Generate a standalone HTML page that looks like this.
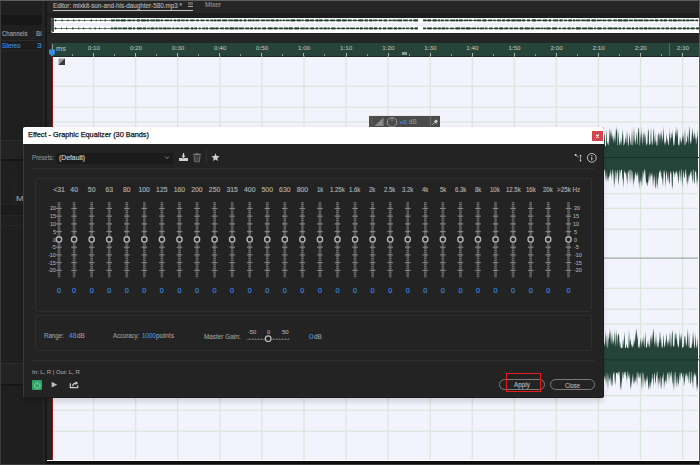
<!DOCTYPE html><html><head><meta charset="utf-8"><style>
*{box-sizing:border-box}
html,body{margin:0;padding:0}
body{width:700px;height:465px;overflow:hidden;position:relative;background:#1f1f1f;font-family:"Liberation Sans",sans-serif}
.ab{position:absolute}
.t{position:absolute;white-space:nowrap;line-height:1;-webkit-text-stroke:0.14px currentColor}

</style></head><body>
<div class="ab" style="left:0;top:0;width:45px;height:465px;background:#1f1f1f"></div>
<div class="ab" style="left:0;top:0;width:1px;height:465px;background:#3a3a3a"></div>
<div class="ab" style="left:1px;top:15px;width:41px;height:10px;background:#171717;border-radius:0 2px 2px 0"></div>
<div class="t" style="left:1.80px;top:30.00px;font-size:7.27px;color:#a0a0a0;transform:scaleX(0.828);transform-origin:0 0;">Channels</div>
<div class="ab" style="left:33px;top:29px;width:1px;height:10px;background:#262626"></div>
<div class="t" style="left:36.30px;top:30.00px;font-size:7.27px;color:#a0a0a0;transform:scaleX(0.855);transform-origin:0 0;">Bi</div>
<div class="ab" style="left:1px;top:40px;width:41px;height:1px;background:#2b2b2b"></div>
<div class="ab" style="left:1px;top:41px;width:41px;height:9px;background:#1c1c1c"></div>
<div class="t" style="left:2.42px;top:43.00px;font-size:6.69px;color:#3a8de0;transform:scaleX(0.941);transform-origin:0 0;">Stereo</div>
<div class="t" style="left:36.77px;top:43.00px;font-size:6.69px;color:#3a8de0;transform:scaleX(1.228);transform-origin:0 0;">3</div>
<div class="ab" style="left:1px;top:50px;width:41px;height:1px;background:#262626"></div>
<div class="ab" style="left:1px;top:140px;width:44px;height:1px;background:#2c2c2c"></div>
<div class="ab" style="left:1px;top:141px;width:44px;height:19px;background:#232323"></div>
<div class="ab" style="left:1px;top:159px;width:44px;height:2px;background:#151515"></div>
<div class="t" style="left:16.47px;top:196.00px;font-size:6.54px;color:#9a9a9a;transform:scaleX(1.394);transform-origin:0 0;">Mi</div>
<div class="ab" style="left:14px;top:182px;width:1px;height:22px;background:#262626"></div>
<div class="ab" style="left:1px;top:204px;width:44px;height:1px;background:#262626"></div>
<div class="ab" style="left:1px;top:205px;width:44px;height:10px;background:#1b1b1b"></div>
<div class="ab" style="left:1px;top:215px;width:44px;height:1px;background:#262626"></div>
<div class="ab" style="left:1px;top:225px;width:44px;height:1px;background:#262626"></div>
<div class="ab" style="left:1px;top:363px;width:44px;height:1px;background:#2c2c2c"></div>
<div class="ab" style="left:1px;top:364px;width:44px;height:21px;background:#232323"></div>
<div class="ab" style="left:1px;top:384px;width:44px;height:2px;background:#151515"></div>
<div class="ab" style="left:42px;top:0;width:3px;height:465px;background:#242424"></div>
<div class="ab" style="left:45px;top:0;width:2px;height:465px;background:#171717"></div>
<div class="ab" style="left:47px;top:0;width:5px;height:465px;background:#252525"></div>
<div class="ab" style="left:0;top:0;width:700px;height:1px;background:#5e5e5e"></div>
<div class="ab" style="left:47px;top:1px;width:653px;height:12px;background:#262626"></div>
<div class="ab" style="left:47px;top:13px;width:653px;height:4px;background:#1e1e1e"></div>
<div class="t" style="left:53.30px;top:2.00px;font-size:6.98px;color:#b4b4b4;transform:scaleX(0.905);transform-origin:0 0;">Editor: mixkit-sun-and-his-daughter-580.mp3 *</div>
<div class="ab" style="left:53px;top:10px;width:140px;height:1px;background:#c4c4c4"></div>
<div class="ab" style="left:188px;top:2.1px;width:5px;height:2.9px;background:#5c5c5c"></div>
<div class="ab" style="left:188px;top:6px;width:5px;height:1.1px;background:#a8a8a8"></div>
<div class="t" style="left:205.47px;top:2.00px;font-size:6.69px;color:#8e8e8e;transform:scaleX(0.982);transform-origin:0 0;">Mixer</div>
<div class="ab" style="left:47px;top:32px;width:653px;height:10.5px;background:#252525"></div>
<div class="ab" style="left:47px;top:32px;width:653px;height:2px;background:#1d1d1d"></div>
<div class="ab" style="left:51px;top:17.5px;width:648px;height:15px;background:#ffffff;border-radius:2px 0 0 2px"></div>
<div class="ab" style="left:54px;top:22.9px;width:645px;height:3.4px;background:#f0f0fa"></div>
<div class="ab" style="left:50.8px;top:18px;width:2.8px;height:13.5px;background:#4a4a4a;border-radius:2px 0 0 2px"></div>
<svg class="ab" style="left:0;top:0" width="700" height="40"><rect x="54" y="20.00" width="364" height="1.0" fill="#6a8577"/><rect x="423" y="20.00" width="275" height="1.0" fill="#6a8577"/><rect x="55.0" y="19.41" width="1.2" height="1.98" fill="#22402f"/><rect x="61.5" y="19.42" width="1.2" height="1.95" fill="#22402f"/><rect x="67.4" y="19.42" width="0.9" height="1.96" fill="#22402f"/><rect x="73.1" y="19.53" width="1.4" height="1.75" fill="#22402f"/><rect x="78.6" y="19.35" width="0.9" height="2.10" fill="#22402f"/><rect x="84.4" y="19.30" width="0.8" height="2.19" fill="#22402f"/><rect x="90.6" y="19.40" width="1.3" height="2.01" fill="#22402f"/><rect x="95.8" y="19.42" width="0.8" height="1.96" fill="#22402f"/><rect x="100.2" y="19.49" width="1.0" height="1.82" fill="#22402f"/><rect x="104.7" y="19.44" width="1.2" height="1.92" fill="#22402f"/><rect x="111.1" y="19.39" width="3.6" height="2.02" fill="#22402f"/><rect x="115.8" y="19.44" width="4.0" height="1.93" fill="#22402f"/><rect x="120.7" y="19.30" width="5.0" height="2.20" fill="#22402f"/><rect x="127.3" y="19.47" width="4.1" height="1.86" fill="#22402f"/><rect x="132.3" y="19.53" width="2.9" height="1.74" fill="#22402f"/><rect x="136.7" y="19.34" width="3.2" height="2.12" fill="#22402f"/><rect x="141.0" y="19.34" width="4.9" height="2.12" fill="#22402f"/><rect x="146.5" y="19.32" width="2.6" height="2.16" fill="#22402f"/><rect x="150.3" y="19.45" width="4.9" height="1.90" fill="#22402f"/><rect x="155.9" y="19.36" width="3.9" height="2.09" fill="#22402f"/><rect x="160.7" y="19.47" width="2.3" height="1.87" fill="#22402f"/><rect x="164.7" y="19.52" width="4.3" height="1.76" fill="#22402f"/><rect x="169.9" y="19.54" width="2.3" height="1.73" fill="#22402f"/><rect x="173.8" y="19.41" width="2.5" height="1.98" fill="#22402f"/><rect x="177.4" y="19.37" width="2.6" height="2.07" fill="#22402f"/><rect x="180.8" y="19.52" width="3.9" height="1.76" fill="#22402f"/><rect x="185.8" y="19.48" width="2.6" height="1.83" fill="#22402f"/><rect x="190.2" y="19.47" width="4.4" height="1.85" fill="#22402f"/><rect x="196.3" y="19.45" width="2.6" height="1.90" fill="#22402f"/><rect x="200.5" y="19.52" width="3.9" height="1.75" fill="#22402f"/><rect x="206.2" y="19.49" width="2.6" height="1.83" fill="#22402f"/><rect x="210.4" y="19.48" width="3.0" height="1.85" fill="#22402f"/><rect x="214.1" y="19.40" width="2.3" height="1.99" fill="#22402f"/><rect x="217.2" y="19.46" width="3.8" height="1.89" fill="#22402f"/><rect x="222.2" y="19.43" width="4.9" height="1.94" fill="#22402f"/><rect x="228.4" y="19.50" width="4.6" height="1.79" fill="#22402f"/><rect x="233.7" y="19.35" width="4.7" height="2.11" fill="#22402f"/><rect x="239.4" y="19.37" width="2.6" height="2.07" fill="#22402f"/><rect x="243.7" y="19.31" width="2.6" height="2.18" fill="#22402f"/><rect x="247.9" y="19.44" width="3.8" height="1.91" fill="#22402f"/><rect x="252.4" y="19.31" width="2.1" height="2.18" fill="#22402f"/><rect x="255.4" y="19.49" width="4.1" height="1.83" fill="#22402f"/><rect x="261.1" y="19.48" width="3.8" height="1.85" fill="#22402f"/><rect x="265.7" y="19.53" width="4.2" height="1.73" fill="#22402f"/><rect x="270.8" y="19.34" width="3.7" height="2.13" fill="#22402f"/><rect x="275.8" y="19.32" width="2.8" height="2.16" fill="#22402f"/><rect x="279.5" y="19.48" width="2.0" height="1.83" fill="#22402f"/><rect x="282.7" y="19.51" width="2.2" height="1.79" fill="#22402f"/><rect x="285.9" y="19.52" width="3.7" height="1.77" fill="#22402f"/><rect x="290.6" y="19.30" width="4.7" height="2.19" fill="#22402f"/><rect x="296.7" y="19.40" width="4.1" height="1.99" fill="#22402f"/><rect x="301.5" y="19.55" width="2.1" height="1.71" fill="#22402f"/><rect x="305.3" y="19.31" width="4.1" height="2.18" fill="#22402f"/><rect x="310.1" y="19.43" width="3.9" height="1.94" fill="#22402f"/><rect x="315.5" y="19.30" width="3.0" height="2.20" fill="#22402f"/><rect x="319.1" y="19.37" width="3.6" height="2.07" fill="#22402f"/><rect x="324.4" y="19.37" width="4.2" height="2.05" fill="#22402f"/><rect x="330.2" y="19.46" width="4.7" height="1.88" fill="#22402f"/><rect x="336.4" y="19.33" width="4.7" height="2.14" fill="#22402f"/><rect x="342.2" y="19.33" width="4.4" height="2.13" fill="#22402f"/><rect x="347.8" y="19.45" width="3.9" height="1.89" fill="#22402f"/><rect x="353.0" y="19.53" width="3.8" height="1.74" fill="#22402f"/><rect x="358.2" y="19.33" width="5.0" height="2.14" fill="#22402f"/><rect x="364.6" y="19.37" width="3.2" height="2.07" fill="#22402f"/><rect x="369.1" y="19.34" width="3.3" height="2.12" fill="#22402f"/><rect x="373.1" y="19.54" width="4.3" height="1.71" fill="#22402f"/><rect x="378.7" y="19.49" width="3.4" height="1.82" fill="#22402f"/><rect x="383.6" y="19.40" width="3.5" height="2.01" fill="#22402f"/><rect x="388.8" y="19.55" width="2.8" height="1.71" fill="#22402f"/><rect x="392.5" y="19.50" width="4.0" height="1.80" fill="#22402f"/><rect x="397.3" y="19.39" width="4.7" height="2.03" fill="#22402f"/><rect x="403.2" y="19.47" width="4.7" height="1.86" fill="#22402f"/><rect x="409.3" y="19.44" width="2.6" height="1.92" fill="#22402f"/><rect x="413.4" y="19.33" width="4.7" height="2.14" fill="#22402f"/><rect x="423.0" y="19.47" width="3.7" height="1.86" fill="#22402f"/><rect x="427.5" y="19.34" width="3.5" height="2.12" fill="#22402f"/><rect x="432.6" y="19.31" width="4.1" height="2.18" fill="#22402f"/><rect x="437.7" y="19.44" width="2.5" height="1.93" fill="#22402f"/><rect x="441.1" y="19.45" width="2.6" height="1.91" fill="#22402f"/><rect x="445.1" y="19.47" width="3.5" height="1.86" fill="#22402f"/><rect x="450.2" y="19.44" width="4.9" height="1.93" fill="#22402f"/><rect x="455.8" y="19.33" width="2.1" height="2.14" fill="#22402f"/><rect x="458.6" y="19.41" width="4.1" height="1.99" fill="#22402f"/><rect x="463.7" y="19.55" width="4.4" height="1.71" fill="#22402f"/><rect x="468.8" y="19.54" width="3.4" height="1.71" fill="#22402f"/><rect x="473.8" y="19.51" width="2.7" height="1.77" fill="#22402f"/><rect x="477.1" y="19.44" width="3.9" height="1.92" fill="#22402f"/><rect x="482.4" y="19.35" width="4.0" height="2.10" fill="#22402f"/><rect x="488.1" y="19.50" width="4.1" height="1.80" fill="#22402f"/><rect x="493.3" y="19.55" width="2.5" height="1.71" fill="#22402f"/><rect x="497.0" y="19.51" width="4.1" height="1.79" fill="#22402f"/><rect x="502.1" y="19.38" width="3.0" height="2.05" fill="#22402f"/><rect x="506.4" y="19.36" width="3.8" height="2.08" fill="#22402f"/><rect x="511.3" y="19.32" width="4.4" height="2.15" fill="#22402f"/><rect x="516.4" y="19.37" width="4.8" height="2.06" fill="#22402f"/><rect x="521.9" y="19.39" width="3.4" height="2.01" fill="#22402f"/><rect x="527.0" y="19.41" width="3.1" height="1.98" fill="#22402f"/><rect x="531.8" y="19.31" width="4.4" height="2.17" fill="#22402f"/><rect x="537.3" y="19.50" width="4.0" height="1.80" fill="#22402f"/><rect x="542.7" y="19.39" width="4.5" height="2.02" fill="#22402f"/><rect x="548.6" y="19.33" width="2.6" height="2.15" fill="#22402f"/><rect x="553.1" y="19.42" width="4.9" height="1.97" fill="#22402f"/><rect x="559.5" y="19.32" width="3.0" height="2.15" fill="#22402f"/><rect x="564.1" y="19.53" width="3.0" height="1.74" fill="#22402f"/><rect x="568.3" y="19.36" width="3.7" height="2.08" fill="#22402f"/><rect x="573.1" y="19.35" width="2.1" height="2.10" fill="#22402f"/><rect x="575.9" y="19.51" width="4.4" height="1.79" fill="#22402f"/><rect x="581.3" y="19.51" width="4.4" height="1.77" fill="#22402f"/><rect x="586.4" y="19.37" width="3.5" height="2.06" fill="#22402f"/><rect x="591.6" y="19.31" width="4.1" height="2.17" fill="#22402f"/><rect x="596.9" y="19.53" width="4.8" height="1.74" fill="#22402f"/><rect x="602.6" y="19.48" width="3.6" height="1.85" fill="#22402f"/><rect x="607.6" y="19.42" width="3.9" height="1.96" fill="#22402f"/><rect x="613.2" y="19.47" width="3.7" height="1.86" fill="#22402f"/><rect x="617.9" y="19.32" width="4.5" height="2.15" fill="#22402f"/><rect x="623.3" y="19.31" width="4.6" height="2.18" fill="#22402f"/><rect x="629.1" y="19.50" width="3.7" height="1.80" fill="#22402f"/><rect x="634.0" y="19.40" width="3.5" height="2.00" fill="#22402f"/><rect x="638.2" y="19.42" width="4.9" height="1.96" fill="#22402f"/><rect x="644.1" y="19.41" width="4.4" height="1.98" fill="#22402f"/><rect x="649.7" y="19.53" width="4.1" height="1.73" fill="#22402f"/><rect x="655.1" y="19.31" width="3.2" height="2.18" fill="#22402f"/><rect x="660.0" y="19.43" width="2.8" height="1.94" fill="#22402f"/><rect x="663.6" y="19.35" width="3.3" height="2.11" fill="#22402f"/><rect x="668.6" y="19.47" width="3.4" height="1.86" fill="#22402f"/><rect x="672.8" y="19.32" width="3.9" height="2.16" fill="#22402f"/><rect x="677.4" y="19.54" width="4.3" height="1.71" fill="#22402f"/><rect x="682.6" y="19.38" width="2.7" height="2.04" fill="#22402f"/><rect x="686.3" y="19.40" width="3.1" height="2.01" fill="#22402f"/><rect x="690.1" y="19.52" width="4.2" height="1.76" fill="#22402f"/><rect x="695.5" y="19.50" width="2.8" height="1.80" fill="#22402f"/><rect x="54" y="28.00" width="364" height="1.0" fill="#6a8577"/><rect x="423" y="28.00" width="275" height="1.0" fill="#6a8577"/><rect x="55.0" y="27.39" width="1.2" height="2.03" fill="#22402f"/><rect x="61.0" y="27.55" width="0.9" height="1.71" fill="#22402f"/><rect x="66.2" y="27.35" width="1.0" height="2.11" fill="#22402f"/><rect x="72.1" y="27.41" width="1.3" height="1.98" fill="#22402f"/><rect x="78.2" y="27.44" width="0.9" height="1.92" fill="#22402f"/><rect x="82.9" y="27.54" width="1.5" height="1.73" fill="#22402f"/><rect x="89.6" y="27.38" width="0.9" height="2.04" fill="#22402f"/><rect x="94.6" y="27.34" width="1.1" height="2.12" fill="#22402f"/><rect x="99.3" y="27.32" width="0.8" height="2.16" fill="#22402f"/><rect x="104.6" y="27.30" width="0.9" height="2.19" fill="#22402f"/><rect x="110.9" y="27.44" width="2.3" height="1.91" fill="#22402f"/><rect x="114.0" y="27.39" width="2.9" height="2.01" fill="#22402f"/><rect x="117.7" y="27.54" width="4.1" height="1.73" fill="#22402f"/><rect x="122.6" y="27.45" width="4.4" height="1.90" fill="#22402f"/><rect x="128.2" y="27.43" width="3.8" height="1.94" fill="#22402f"/><rect x="133.0" y="27.37" width="2.1" height="2.06" fill="#22402f"/><rect x="136.9" y="27.38" width="4.9" height="2.03" fill="#22402f"/><rect x="142.8" y="27.38" width="3.1" height="2.05" fill="#22402f"/><rect x="147.3" y="27.49" width="2.3" height="1.82" fill="#22402f"/><rect x="150.7" y="27.35" width="3.5" height="2.11" fill="#22402f"/><rect x="155.5" y="27.34" width="2.1" height="2.11" fill="#22402f"/><rect x="158.7" y="27.49" width="3.6" height="1.81" fill="#22402f"/><rect x="163.3" y="27.36" width="3.2" height="2.09" fill="#22402f"/><rect x="167.2" y="27.51" width="3.6" height="1.79" fill="#22402f"/><rect x="172.3" y="27.48" width="2.1" height="1.84" fill="#22402f"/><rect x="175.4" y="27.54" width="3.9" height="1.73" fill="#22402f"/><rect x="180.5" y="27.48" width="2.6" height="1.84" fill="#22402f"/><rect x="184.3" y="27.43" width="4.9" height="1.94" fill="#22402f"/><rect x="190.9" y="27.32" width="2.5" height="2.16" fill="#22402f"/><rect x="194.4" y="27.36" width="2.6" height="2.07" fill="#22402f"/><rect x="198.7" y="27.48" width="2.0" height="1.83" fill="#22402f"/><rect x="202.3" y="27.49" width="3.0" height="1.82" fill="#22402f"/><rect x="205.9" y="27.40" width="2.1" height="2.01" fill="#22402f"/><rect x="209.8" y="27.42" width="5.0" height="1.95" fill="#22402f"/><rect x="215.4" y="27.35" width="3.0" height="2.09" fill="#22402f"/><rect x="220.0" y="27.49" width="3.9" height="1.81" fill="#22402f"/><rect x="225.1" y="27.39" width="3.4" height="2.01" fill="#22402f"/><rect x="229.5" y="27.33" width="4.8" height="2.15" fill="#22402f"/><rect x="235.1" y="27.33" width="2.9" height="2.14" fill="#22402f"/><rect x="238.9" y="27.42" width="4.8" height="1.96" fill="#22402f"/><rect x="245.2" y="27.50" width="4.1" height="1.81" fill="#22402f"/><rect x="250.2" y="27.38" width="2.8" height="2.04" fill="#22402f"/><rect x="254.4" y="27.33" width="2.4" height="2.14" fill="#22402f"/><rect x="257.9" y="27.44" width="2.7" height="1.92" fill="#22402f"/><rect x="262.4" y="27.39" width="3.7" height="2.01" fill="#22402f"/><rect x="267.8" y="27.36" width="4.9" height="2.08" fill="#22402f"/><rect x="273.8" y="27.32" width="3.8" height="2.15" fill="#22402f"/><rect x="279.1" y="27.46" width="3.7" height="1.87" fill="#22402f"/><rect x="283.9" y="27.41" width="4.2" height="1.98" fill="#22402f"/><rect x="288.7" y="27.32" width="4.1" height="2.15" fill="#22402f"/><rect x="294.4" y="27.32" width="4.7" height="2.16" fill="#22402f"/><rect x="300.4" y="27.46" width="4.4" height="1.89" fill="#22402f"/><rect x="305.4" y="27.47" width="3.1" height="1.86" fill="#22402f"/><rect x="310.2" y="27.41" width="4.1" height="1.97" fill="#22402f"/><rect x="315.6" y="27.42" width="2.4" height="1.97" fill="#22402f"/><rect x="319.5" y="27.49" width="3.2" height="1.82" fill="#22402f"/><rect x="323.7" y="27.38" width="3.0" height="2.04" fill="#22402f"/><rect x="327.5" y="27.47" width="2.3" height="1.86" fill="#22402f"/><rect x="331.2" y="27.39" width="4.3" height="2.03" fill="#22402f"/><rect x="337.2" y="27.54" width="3.1" height="1.71" fill="#22402f"/><rect x="341.5" y="27.51" width="3.3" height="1.79" fill="#22402f"/><rect x="346.2" y="27.49" width="3.0" height="1.82" fill="#22402f"/><rect x="350.2" y="27.55" width="4.8" height="1.70" fill="#22402f"/><rect x="356.1" y="27.50" width="2.8" height="1.80" fill="#22402f"/><rect x="360.0" y="27.32" width="2.7" height="2.16" fill="#22402f"/><rect x="363.9" y="27.51" width="4.1" height="1.78" fill="#22402f"/><rect x="369.1" y="27.34" width="3.8" height="2.12" fill="#22402f"/><rect x="373.9" y="27.34" width="3.4" height="2.13" fill="#22402f"/><rect x="378.8" y="27.42" width="2.7" height="1.97" fill="#22402f"/><rect x="383.0" y="27.38" width="3.2" height="2.04" fill="#22402f"/><rect x="387.6" y="27.41" width="4.9" height="1.98" fill="#22402f"/><rect x="393.9" y="27.37" width="3.1" height="2.07" fill="#22402f"/><rect x="398.0" y="27.46" width="3.5" height="1.88" fill="#22402f"/><rect x="402.5" y="27.49" width="2.4" height="1.81" fill="#22402f"/><rect x="406.1" y="27.54" width="2.8" height="1.72" fill="#22402f"/><rect x="410.4" y="27.32" width="2.9" height="2.17" fill="#22402f"/><rect x="414.6" y="27.33" width="3.2" height="2.14" fill="#22402f"/><rect x="423.0" y="27.52" width="3.0" height="1.76" fill="#22402f"/><rect x="427.3" y="27.40" width="4.5" height="2.00" fill="#22402f"/><rect x="433.4" y="27.40" width="3.2" height="2.01" fill="#22402f"/><rect x="437.6" y="27.46" width="3.2" height="1.89" fill="#22402f"/><rect x="441.8" y="27.35" width="3.2" height="2.10" fill="#22402f"/><rect x="445.8" y="27.49" width="2.6" height="1.83" fill="#22402f"/><rect x="450.2" y="27.54" width="3.6" height="1.73" fill="#22402f"/><rect x="455.4" y="27.34" width="4.6" height="2.11" fill="#22402f"/><rect x="461.0" y="27.47" width="4.2" height="1.85" fill="#22402f"/><rect x="466.0" y="27.34" width="4.6" height="2.12" fill="#22402f"/><rect x="471.5" y="27.54" width="4.6" height="1.71" fill="#22402f"/><rect x="477.1" y="27.51" width="2.0" height="1.79" fill="#22402f"/><rect x="479.9" y="27.48" width="4.1" height="1.85" fill="#22402f"/><rect x="484.9" y="27.47" width="2.6" height="1.86" fill="#22402f"/><rect x="489.1" y="27.52" width="3.8" height="1.75" fill="#22402f"/><rect x="494.3" y="27.44" width="3.6" height="1.92" fill="#22402f"/><rect x="499.2" y="27.35" width="4.0" height="2.10" fill="#22402f"/><rect x="504.3" y="27.43" width="3.9" height="1.93" fill="#22402f"/><rect x="509.6" y="27.45" width="3.2" height="1.91" fill="#22402f"/><rect x="514.0" y="27.48" width="4.1" height="1.84" fill="#22402f"/><rect x="519.8" y="27.34" width="3.5" height="2.13" fill="#22402f"/><rect x="524.7" y="27.38" width="4.9" height="2.04" fill="#22402f"/><rect x="530.7" y="27.40" width="3.2" height="2.00" fill="#22402f"/><rect x="535.4" y="27.52" width="4.5" height="1.76" fill="#22402f"/><rect x="540.6" y="27.53" width="2.3" height="1.74" fill="#22402f"/><rect x="543.6" y="27.49" width="2.0" height="1.82" fill="#22402f"/><rect x="546.4" y="27.40" width="4.1" height="2.01" fill="#22402f"/><rect x="552.2" y="27.36" width="4.9" height="2.07" fill="#22402f"/><rect x="558.8" y="27.49" width="2.1" height="1.81" fill="#22402f"/><rect x="562.6" y="27.50" width="3.4" height="1.80" fill="#22402f"/><rect x="567.5" y="27.41" width="3.3" height="1.97" fill="#22402f"/><rect x="571.8" y="27.53" width="2.7" height="1.74" fill="#22402f"/><rect x="575.8" y="27.30" width="4.9" height="2.19" fill="#22402f"/><rect x="582.2" y="27.46" width="4.8" height="1.88" fill="#22402f"/><rect x="588.0" y="27.40" width="4.8" height="2.00" fill="#22402f"/><rect x="594.1" y="27.49" width="2.0" height="1.81" fill="#22402f"/><rect x="597.4" y="27.34" width="4.2" height="2.11" fill="#22402f"/><rect x="603.1" y="27.45" width="3.0" height="1.89" fill="#22402f"/><rect x="607.7" y="27.43" width="5.0" height="1.94" fill="#22402f"/><rect x="613.5" y="27.42" width="3.9" height="1.97" fill="#22402f"/><rect x="618.4" y="27.45" width="2.7" height="1.89" fill="#22402f"/><rect x="622.5" y="27.41" width="2.4" height="1.97" fill="#22402f"/><rect x="626.6" y="27.49" width="4.2" height="1.83" fill="#22402f"/><rect x="631.9" y="27.37" width="2.3" height="2.07" fill="#22402f"/><rect x="635.6" y="27.41" width="2.5" height="1.97" fill="#22402f"/><rect x="639.4" y="27.46" width="3.7" height="1.89" fill="#22402f"/><rect x="644.1" y="27.30" width="3.1" height="2.20" fill="#22402f"/><rect x="648.2" y="27.44" width="3.5" height="1.93" fill="#22402f"/><rect x="652.5" y="27.50" width="3.2" height="1.80" fill="#22402f"/><rect x="656.7" y="27.46" width="3.1" height="1.87" fill="#22402f"/><rect x="661.5" y="27.47" width="2.9" height="1.87" fill="#22402f"/><rect x="665.8" y="27.42" width="3.2" height="1.96" fill="#22402f"/><rect x="670.4" y="27.38" width="2.2" height="2.04" fill="#22402f"/><rect x="673.3" y="27.35" width="2.8" height="2.10" fill="#22402f"/><rect x="677.8" y="27.51" width="4.0" height="1.79" fill="#22402f"/><rect x="683.0" y="27.34" width="2.8" height="2.12" fill="#22402f"/><rect x="686.7" y="27.39" width="2.6" height="2.02" fill="#22402f"/><rect x="690.7" y="27.43" width="3.8" height="1.94" fill="#22402f"/><rect x="696.2" y="27.32" width="3.4" height="2.17" fill="#22402f"/></svg>
<div class="ab" style="left:51px;top:42.5px;width:648px;height:14px;background:#27443a"></div>
<div class="ab" style="left:51px;top:42px;width:648px;height:1px;background:#1d2a24"></div>
<div class="ab" style="left:51px;top:56px;width:648px;height:1px;background:#1a2620"></div>
<div class="t" style="left:55.52px;top:45.00px;font-size:7.56px;color:#a9b5ae;transform:scaleX(0.986);transform-origin:0 0;">ms</div>
<div class="t" style="left:87.81px;top:45.00px;font-size:6.25px;color:#a9b5ae;transform:scaleX(1.000);transform-origin:0 0;">0:10</div>
<div class="ab" style="left:93.10px;top:53px;width:1px;height:3px;background:#a9b5ae"></div>
<div class="t" style="left:129.88px;top:45.00px;font-size:6.25px;color:#a9b5ae;transform:scaleX(1.000);transform-origin:0 0;">0:20</div>
<div class="ab" style="left:135.17px;top:53px;width:1px;height:3px;background:#a9b5ae"></div>
<div class="t" style="left:171.95px;top:45.00px;font-size:6.25px;color:#a9b5ae;transform:scaleX(1.000);transform-origin:0 0;">0:30</div>
<div class="ab" style="left:177.24px;top:53px;width:1px;height:3px;background:#a9b5ae"></div>
<div class="t" style="left:214.02px;top:45.00px;font-size:6.25px;color:#a9b5ae;transform:scaleX(1.000);transform-origin:0 0;">0:40</div>
<div class="ab" style="left:219.31px;top:53px;width:1px;height:3px;background:#a9b5ae"></div>
<div class="t" style="left:256.09px;top:45.00px;font-size:6.25px;color:#a9b5ae;transform:scaleX(1.000);transform-origin:0 0;">0:50</div>
<div class="ab" style="left:261.38px;top:53px;width:1px;height:3px;background:#a9b5ae"></div>
<div class="t" style="left:298.05px;top:45.00px;font-size:6.25px;color:#a9b5ae;transform:scaleX(1.000);transform-origin:0 0;">1:00</div>
<div class="ab" style="left:303.45px;top:53px;width:1px;height:3px;background:#a9b5ae"></div>
<div class="t" style="left:340.12px;top:45.00px;font-size:6.25px;color:#a9b5ae;transform:scaleX(1.000);transform-origin:0 0;">1:10</div>
<div class="ab" style="left:345.52px;top:53px;width:1px;height:3px;background:#a9b5ae"></div>
<div class="t" style="left:382.19px;top:45.00px;font-size:6.25px;color:#a9b5ae;transform:scaleX(1.000);transform-origin:0 0;">1:20</div>
<div class="ab" style="left:387.59px;top:53px;width:1px;height:3px;background:#a9b5ae"></div>
<div class="t" style="left:424.26px;top:45.00px;font-size:6.25px;color:#a9b5ae;transform:scaleX(1.000);transform-origin:0 0;">1:30</div>
<div class="ab" style="left:429.66px;top:53px;width:1px;height:3px;background:#a9b5ae"></div>
<div class="t" style="left:466.33px;top:45.00px;font-size:6.25px;color:#a9b5ae;transform:scaleX(1.000);transform-origin:0 0;">1:40</div>
<div class="ab" style="left:471.73px;top:53px;width:1px;height:3px;background:#a9b5ae"></div>
<div class="t" style="left:508.40px;top:45.00px;font-size:6.25px;color:#a9b5ae;transform:scaleX(1.000);transform-origin:0 0;">1:50</div>
<div class="ab" style="left:513.80px;top:53px;width:1px;height:3px;background:#a9b5ae"></div>
<div class="t" style="left:550.54px;top:45.00px;font-size:6.25px;color:#a9b5ae;transform:scaleX(1.000);transform-origin:0 0;">2:00</div>
<div class="ab" style="left:555.87px;top:53px;width:1px;height:3px;background:#a9b5ae"></div>
<div class="t" style="left:592.61px;top:45.00px;font-size:6.25px;color:#a9b5ae;transform:scaleX(1.000);transform-origin:0 0;">2:10</div>
<div class="ab" style="left:597.94px;top:53px;width:1px;height:3px;background:#a9b5ae"></div>
<div class="t" style="left:634.68px;top:45.00px;font-size:6.25px;color:#a9b5ae;transform:scaleX(1.000);transform-origin:0 0;">2:20</div>
<div class="ab" style="left:640.01px;top:53px;width:1px;height:3px;background:#a9b5ae"></div>
<div class="t" style="left:676.75px;top:45.00px;font-size:6.25px;color:#a9b5ae;transform:scaleX(1.000);transform-origin:0 0;">2:30</div>
<div class="ab" style="left:682.08px;top:53px;width:1px;height:3px;background:#a9b5ae"></div>
<div class="ab" style="left:72.06px;top:54px;width:1px;height:2px;background:#8a9a90"></div>
<div class="ab" style="left:114.13px;top:54px;width:1px;height:2px;background:#8a9a90"></div>
<div class="ab" style="left:156.20px;top:54px;width:1px;height:2px;background:#8a9a90"></div>
<div class="ab" style="left:198.28px;top:54px;width:1px;height:2px;background:#8a9a90"></div>
<div class="ab" style="left:240.34px;top:54px;width:1px;height:2px;background:#8a9a90"></div>
<div class="ab" style="left:282.41px;top:54px;width:1px;height:2px;background:#8a9a90"></div>
<div class="ab" style="left:324.49px;top:54px;width:1px;height:2px;background:#8a9a90"></div>
<div class="ab" style="left:366.55px;top:54px;width:1px;height:2px;background:#8a9a90"></div>
<div class="ab" style="left:408.62px;top:54px;width:1px;height:2px;background:#8a9a90"></div>
<div class="ab" style="left:450.69px;top:54px;width:1px;height:2px;background:#8a9a90"></div>
<div class="ab" style="left:492.76px;top:54px;width:1px;height:2px;background:#8a9a90"></div>
<div class="ab" style="left:534.84px;top:54px;width:1px;height:2px;background:#8a9a90"></div>
<div class="ab" style="left:576.90px;top:54px;width:1px;height:2px;background:#8a9a90"></div>
<div class="ab" style="left:618.97px;top:54px;width:1px;height:2px;background:#8a9a90"></div>
<div class="ab" style="left:661.04px;top:54px;width:1px;height:2px;background:#8a9a90"></div>
<div class="ab" style="left:703.11px;top:54px;width:1px;height:2px;background:#8a9a90"></div>
<div class="ab" style="left:52px;top:44px;width:1px;height:8px;background:#8a9a90"></div>
<div class="ab" style="left:669px;top:43px;width:1px;height:13px;background:#2f6f9a"></div>
<div class="ab" style="left:401.8px;top:51.8px;width:5.3px;height:3.2px;background:#8a9a90"></div>
<svg class="ab" style="left:48px;top:49px" width="8" height="8"><path d="M1,0.5 H7 V4.5 L4,7.5 L1,4.5Z" fill="#3a8ee6"/></svg>
<div class="ab" style="left:52px;top:56.5px;width:647px;height:403.0px;background:#f3f3fd"></div>
<svg class="ab" style="left:0;top:0" width="700" height="465"><rect x="92.95" y="56.5" width="1.3" height="403.0" fill="#d9e7dd"/><rect x="135.02" y="56.5" width="1.3" height="403.0" fill="#d9e7dd"/><rect x="177.09" y="56.5" width="1.3" height="403.0" fill="#d9e7dd"/><rect x="219.16" y="56.5" width="1.3" height="403.0" fill="#d9e7dd"/><rect x="261.23" y="56.5" width="1.3" height="403.0" fill="#d9e7dd"/><rect x="303.30" y="56.5" width="1.3" height="403.0" fill="#d9e7dd"/><rect x="345.37" y="56.5" width="1.3" height="403.0" fill="#d9e7dd"/><rect x="387.44" y="56.5" width="1.3" height="403.0" fill="#d9e7dd"/><rect x="429.51" y="56.5" width="1.3" height="403.0" fill="#d9e7dd"/><rect x="471.58" y="56.5" width="1.3" height="403.0" fill="#d9e7dd"/><rect x="513.65" y="56.5" width="1.3" height="403.0" fill="#d9e7dd"/><rect x="555.72" y="56.5" width="1.3" height="403.0" fill="#d9e7dd"/><rect x="597.79" y="56.5" width="1.3" height="403.0" fill="#d9e7dd"/><rect x="639.86" y="56.5" width="1.3" height="403.0" fill="#d9e7dd"/><rect x="681.93" y="56.5" width="1.3" height="403.0" fill="#d9e7dd"/><rect x="52" y="85.72" width="647" height="1.3" fill="#d9e7dd"/><rect x="52" y="228.58" width="647" height="1.3" fill="#d9e7dd"/><rect x="52" y="106.58" width="647" height="1.3" fill="#d9e7dd"/><rect x="52" y="207.72" width="647" height="1.3" fill="#d9e7dd"/><rect x="52" y="121.35" width="647" height="1.3" fill="#d9e7dd"/><rect x="52" y="192.95" width="647" height="1.3" fill="#d9e7dd"/><rect x="52" y="287.72" width="647" height="1.3" fill="#d9e7dd"/><rect x="52" y="430.58" width="647" height="1.3" fill="#d9e7dd"/><rect x="52" y="308.58" width="647" height="1.3" fill="#d9e7dd"/><rect x="52" y="409.72" width="647" height="1.3" fill="#d9e7dd"/><rect x="52" y="323.35" width="647" height="1.3" fill="#d9e7dd"/><rect x="52" y="394.95" width="647" height="1.3" fill="#d9e7dd"/><rect x="52" y="257.4" width="647" height="1.5" fill="#a9b8ae"/></svg>
<div class="ab" style="left:51.5px;top:57px;width:1px;height:403px;background:#8a1a1a"></div>
<svg class="ab" style="left:58px;top:58px" width="8" height="8"><rect x="0.5" y="0.5" width="6.5" height="6.5" fill="#9a9a9a"/><path d="M7,0.5 L7,7 L0.5,7Z" fill="#3a3a3a"/></svg>
<div class="ab" style="left:47px;top:459.5px;width:653px;height:1px;background:#ffffff"></div>
<div class="ab" style="left:47px;top:460.5px;width:653px;height:3px;background:#0e0e0e"></div>
<div class="ab" style="left:0;top:463.5px;width:700px;height:2px;background:#3a3a3a"></div>
<div class="ab" style="left:698px;top:57px;width:1px;height:403px;background:#ffffff"></div>
<div class="ab" style="left:699px;top:0;width:1px;height:465px;background:#5a5a5a"></div>
<svg class="ab" style="left:0;top:0" width="700" height="465">
<path d="M603.0,130.6 L603.5,141.0 L604.0,135.6 L604.5,132.4 L605.0,146.6 L605.5,145.7 L606.0,146.1 L606.5,128.2 L607.0,143.5 L607.5,141.0 L608.0,145.6 L608.5,145.2 L609.0,138.0 L609.5,125.1 L610.0,144.8 L610.5,128.1 L611.0,137.1 L611.5,127.8 L612.0,140.3 L612.5,133.0 L613.0,137.9 L613.5,141.9 L614.0,133.0 L614.5,142.3 L615.0,133.0 L615.5,143.1 L616.0,125.1 L616.5,131.8 L617.0,126.6 L617.5,145.1 L618.0,145.8 L618.5,128.0 L619.0,138.7 L619.5,145.6 L620.0,145.2 L620.5,142.3 L621.0,136.4 L621.5,145.7 L622.0,136.2 L622.5,130.7 L623.0,130.1 L623.5,146.0 L624.0,145.2 L624.5,144.3 L625.0,140.9 L625.5,135.3 L626.0,142.7 L626.5,142.6 L627.0,129.2 L627.5,136.4 L628.0,146.4 L628.5,146.0 L629.0,140.4 L629.5,132.3 L630.0,137.2 L630.5,144.6 L631.0,145.0 L631.5,144.7 L632.0,126.3 L632.5,145.2 L633.0,145.8 L633.5,139.7 L634.0,125.1 L634.5,141.9 L635.0,136.1 L635.5,145.8 L636.0,140.6 L636.5,131.3 L637.0,144.5 L637.5,144.3 L638.0,128.8 L638.5,128.6 L639.0,126.8 L639.5,145.7 L640.0,145.1 L640.5,131.4 L641.0,144.6 L641.5,125.1 L642.0,140.7 L642.5,146.0 L643.0,132.2 L643.5,133.5 L644.0,145.2 L644.5,129.0 L645.0,141.3 L645.5,133.7 L646.0,145.6 L646.5,145.5 L647.0,142.3 L647.5,144.9 L648.0,129.0 L648.5,129.3 L649.0,141.9 L649.5,145.7 L650.0,144.4 L650.5,144.3 L651.0,125.1 L651.5,145.2 L652.0,137.6 L652.5,144.7 L653.0,144.9 L653.5,125.8 L654.0,134.3 L654.5,144.6 L655.0,128.8 L655.5,144.5 L656.0,139.1 L656.5,145.4 L657.0,146.0 L657.5,144.9 L658.0,132.0 L658.5,134.7 L659.0,145.4 L659.5,132.3 L660.0,137.2 L660.5,130.9 L661.0,145.7 L661.5,129.9 L662.0,132.7 L662.5,142.2 L663.0,137.1 L663.5,125.1 L664.0,137.1 L664.5,142.0 L665.0,145.9 L665.5,140.6 L666.0,145.8 L666.5,132.1 L667.0,138.9 L667.5,139.5 L668.0,139.9 L668.5,145.3 L669.0,145.4 L669.5,126.6 L670.0,139.0 L670.5,137.8 L671.0,131.8 L671.5,134.1 L672.0,134.4 L672.5,128.8 L673.0,140.0 L673.5,145.5 L674.0,145.9 L674.5,144.2 L675.0,136.8 L675.5,131.3 L676.0,126.1 L676.5,131.5 L677.0,135.6 L677.5,126.6 L678.0,142.1 L678.5,145.6 L679.0,145.5 L679.5,145.5 L680.0,136.3 L680.5,143.0 L681.0,135.9 L681.5,145.0 L682.0,139.4 L682.5,131.1 L683.0,138.7 L683.5,132.7 L684.0,144.7 L684.5,145.5 L685.0,125.1 L685.5,145.3 L686.0,144.3 L686.5,141.4 L687.0,141.2 L687.5,131.8 L688.0,137.1 L688.5,145.9 L689.0,127.9 L689.5,125.6 L690.0,139.7 L690.5,144.4 L691.0,139.5 L691.5,141.6 L692.0,129.8 L692.5,127.6 L693.0,133.2 L693.5,137.3 L694.0,134.6 L694.5,129.2 L695.0,138.0 L695.5,133.0 L696.0,145.5 L696.5,142.3 L697.0,134.3 L697.5,138.7 L698.0,126.1 L698.0,182.9 L697.5,178.9 L697.0,188.1 L696.5,175.4 L696.0,170.4 L695.5,172.8 L695.0,169.8 L694.5,183.7 L694.0,184.0 L693.5,169.6 L693.0,169.3 L692.5,185.3 L692.0,178.9 L691.5,172.0 L691.0,170.1 L690.5,174.7 L690.0,174.2 L689.5,178.8 L689.0,175.8 L688.5,178.3 L688.0,184.8 L687.5,180.2 L687.0,187.4 L686.5,170.3 L686.0,177.0 L685.5,169.2 L685.0,170.1 L684.5,178.6 L684.0,177.3 L683.5,169.5 L683.0,173.6 L682.5,188.9 L682.0,169.3 L681.5,169.2 L681.0,185.4 L680.5,170.0 L680.0,180.4 L679.5,170.1 L679.0,170.9 L678.5,185.3 L678.0,180.5 L677.5,174.2 L677.0,169.8 L676.5,174.4 L676.0,170.4 L675.5,173.3 L675.0,177.0 L674.5,177.3 L674.0,172.7 L673.5,170.2 L673.0,176.1 L672.5,188.0 L672.0,190.1 L671.5,171.1 L671.0,175.1 L670.5,170.4 L670.0,176.0 L669.5,184.8 L669.0,182.4 L668.5,177.6 L668.0,174.7 L667.5,183.4 L667.0,176.7 L666.5,169.5 L666.0,176.2 L665.5,190.1 L665.0,176.9 L664.5,169.5 L664.0,175.2 L663.5,169.9 L663.0,187.5 L662.5,178.5 L662.0,180.3 L661.5,175.9 L661.0,176.9 L660.5,170.3 L660.0,170.1 L659.5,171.9 L659.0,173.0 L658.5,181.4 L658.0,176.7 L657.5,189.3 L657.0,187.2 L656.5,173.3 L656.0,190.1 L655.5,187.6 L655.0,176.1 L654.5,177.3 L654.0,185.9 L653.5,176.8 L653.0,189.4 L652.5,170.6 L652.0,177.5 L651.5,173.7 L651.0,175.2 L650.5,176.3 L650.0,182.3 L649.5,170.4 L649.0,182.3 L648.5,178.5 L648.0,185.5 L647.5,186.1 L647.0,185.2 L646.5,182.2 L646.0,185.0 L645.5,173.8 L645.0,169.2 L644.5,169.3 L644.0,175.4 L643.5,179.0 L643.0,169.8 L642.5,177.5 L642.0,188.9 L641.5,181.6 L641.0,179.7 L640.5,181.4 L640.0,185.7 L639.5,188.9 L639.0,169.3 L638.5,186.0 L638.0,175.9 L637.5,172.8 L637.0,178.0 L636.5,174.9 L636.0,174.2 L635.5,170.8 L635.0,178.5 L634.5,182.4 L634.0,178.5 L633.5,189.1 L633.0,170.9 L632.5,173.3 L632.0,185.2 L631.5,170.8 L631.0,169.5 L630.5,169.7 L630.0,183.7 L629.5,169.9 L629.0,169.8 L628.5,174.7 L628.0,169.6 L627.5,188.9 L627.0,170.4 L626.5,182.5 L626.0,175.4 L625.5,172.8 L625.0,174.0 L624.5,171.2 L624.0,169.5 L623.5,190.0 L623.0,178.8 L622.5,182.3 L622.0,169.6 L621.5,169.7 L621.0,169.7 L620.5,176.9 L620.0,169.8 L619.5,169.7 L619.0,180.2 L618.5,186.7 L618.0,170.9 L617.5,169.4 L617.0,179.3 L616.5,169.8 L616.0,183.2 L615.5,172.1 L615.0,169.4 L614.5,182.0 L614.0,189.2 L613.5,169.1 L613.0,179.2 L612.5,169.4 L612.0,169.4 L611.5,181.6 L611.0,175.0 L610.5,169.6 L610.0,176.6 L609.5,176.8 L609.0,176.2 L608.5,183.0 L608.0,177.0 L607.5,181.7 L607.0,169.5 L606.5,184.0 L606.0,169.6 L605.5,181.8 L605.0,169.0 L604.5,172.9 L604.0,168.4 L603.5,168.8 L603.0,179.1Z" fill="#7f978a"/>
<path d="M603.0,134.4 L603.5,143.3 L604.0,136.1 L604.5,134.6 L605.0,146.6 L605.5,145.7 L606.0,146.1 L606.5,130.1 L607.0,143.6 L607.5,143.5 L608.0,145.6 L608.5,145.2 L609.0,141.3 L609.5,128.0 L610.0,144.8 L610.5,130.2 L611.0,138.6 L611.5,132.1 L612.0,140.4 L612.5,135.0 L613.0,141.4 L613.5,144.1 L614.0,135.6 L614.5,142.4 L615.0,137.9 L615.5,143.9 L616.0,128.3 L616.5,132.9 L617.0,129.5 L617.5,145.1 L618.0,145.8 L618.5,131.7 L619.0,141.5 L619.5,145.6 L620.0,145.2 L620.5,144.0 L621.0,139.5 L621.5,145.7 L622.0,140.5 L622.5,134.8 L623.0,133.5 L623.5,146.0 L624.0,145.2 L624.5,144.3 L625.0,141.8 L625.5,137.6 L626.0,142.8 L626.5,143.6 L627.0,131.7 L627.5,140.4 L628.0,146.4 L628.5,146.0 L629.0,141.5 L629.5,134.9 L630.0,139.2 L630.5,144.6 L631.0,145.0 L631.5,144.7 L632.0,130.0 L632.5,145.2 L633.0,145.8 L633.5,140.6 L634.0,128.2 L634.5,143.6 L635.0,138.3 L635.5,145.8 L636.0,142.2 L636.5,131.3 L637.0,144.5 L637.5,144.3 L638.0,133.5 L638.5,132.0 L639.0,128.0 L639.5,145.7 L640.0,145.1 L640.5,133.2 L641.0,144.6 L641.5,129.1 L642.0,141.2 L642.5,146.0 L643.0,133.9 L643.5,135.4 L644.0,145.2 L644.5,131.8 L645.0,142.7 L645.5,133.7 L646.0,145.6 L646.5,145.5 L647.0,142.9 L647.5,144.9 L648.0,130.9 L648.5,130.8 L649.0,142.4 L649.5,145.7 L650.0,144.4 L650.5,144.3 L651.0,128.3 L651.5,145.2 L652.0,141.0 L652.5,144.7 L653.0,144.9 L653.5,128.0 L654.0,139.0 L654.5,144.6 L655.0,133.3 L655.5,144.5 L656.0,140.3 L656.5,145.4 L657.0,146.0 L657.5,144.9 L658.0,132.8 L658.5,135.0 L659.0,145.4 L659.5,133.9 L660.0,141.8 L660.5,131.6 L661.0,145.7 L661.5,134.4 L662.0,136.1 L662.5,143.0 L663.0,138.3 L663.5,128.9 L664.0,141.3 L664.5,143.7 L665.0,145.9 L665.5,140.9 L666.0,145.8 L666.5,134.1 L667.0,140.1 L667.5,142.0 L668.0,143.3 L668.5,145.3 L669.0,145.4 L669.5,131.2 L670.0,139.3 L670.5,142.2 L671.0,136.2 L671.5,138.3 L672.0,138.1 L672.5,133.2 L673.0,140.8 L673.5,145.5 L674.0,145.9 L674.5,144.2 L675.0,137.0 L675.5,134.5 L676.0,130.9 L676.5,135.7 L677.0,137.8 L677.5,128.5 L678.0,143.0 L678.5,145.6 L679.0,145.5 L679.5,145.5 L680.0,136.3 L680.5,143.2 L681.0,140.0 L681.5,145.0 L682.0,140.7 L682.5,135.2 L683.0,141.2 L683.5,135.6 L684.0,144.7 L684.5,145.5 L685.0,128.7 L685.5,145.3 L686.0,144.3 L686.5,141.4 L687.0,142.8 L687.5,135.2 L688.0,139.0 L688.5,145.9 L689.0,132.1 L689.5,128.0 L690.0,143.4 L690.5,144.4 L691.0,141.3 L691.5,143.7 L692.0,132.8 L692.5,131.4 L693.0,136.4 L693.5,139.4 L694.0,139.3 L694.5,133.1 L695.0,139.7 L695.5,137.3 L696.0,145.5 L696.5,142.5 L697.0,136.4 L697.5,138.8 L698.0,129.6 L698.0,179.9 L697.5,174.5 L697.0,184.9 L696.5,175.3 L696.0,170.4 L695.5,172.2 L695.0,169.8 L694.5,182.0 L694.0,183.0 L693.5,169.6 L693.0,169.3 L692.5,181.7 L692.0,176.1 L691.5,171.5 L691.0,170.1 L690.5,172.0 L690.0,173.3 L689.5,176.0 L689.0,173.9 L688.5,175.6 L688.0,182.8 L687.5,176.0 L687.0,185.6 L686.5,170.3 L686.0,175.8 L685.5,169.2 L685.0,170.1 L684.5,178.1 L684.0,177.1 L683.5,169.5 L683.0,173.5 L682.5,187.2 L682.0,169.3 L681.5,169.2 L681.0,183.3 L680.5,170.0 L680.0,177.5 L679.5,170.1 L679.0,170.9 L678.5,183.7 L678.0,177.3 L677.5,173.9 L677.0,169.8 L676.5,172.7 L676.0,170.4 L675.5,171.9 L675.0,174.0 L674.5,174.3 L674.0,172.0 L673.5,170.2 L673.0,172.3 L672.5,186.6 L672.0,187.3 L671.5,171.1 L671.0,174.0 L670.5,170.4 L670.0,171.6 L669.5,183.8 L669.0,181.9 L668.5,173.1 L668.0,171.4 L667.5,180.1 L667.0,172.7 L666.5,169.5 L666.0,174.1 L665.5,185.8 L665.0,174.3 L664.5,169.5 L664.0,171.6 L663.5,169.9 L663.0,186.4 L662.5,178.0 L662.0,177.8 L661.5,172.0 L661.0,173.2 L660.5,170.3 L660.0,170.1 L659.5,171.8 L659.0,172.4 L658.5,179.0 L658.0,172.7 L657.5,185.1 L657.0,183.9 L656.5,171.3 L656.0,187.6 L655.5,186.8 L655.0,173.2 L654.5,175.8 L654.0,181.1 L653.5,174.2 L653.0,186.7 L652.5,170.6 L652.0,177.5 L651.5,172.8 L651.0,175.0 L650.5,171.8 L650.0,179.7 L649.5,170.4 L649.0,178.2 L648.5,173.8 L648.0,183.4 L647.5,183.1 L647.0,181.6 L646.5,182.1 L646.0,181.8 L645.5,173.4 L645.0,169.2 L644.5,169.3 L644.0,171.8 L643.5,174.4 L643.0,169.8 L642.5,172.6 L642.0,185.6 L641.5,177.8 L641.0,174.8 L640.5,180.7 L640.0,181.0 L639.5,184.3 L639.0,169.3 L638.5,184.4 L638.0,173.3 L637.5,171.1 L637.0,176.5 L636.5,174.7 L636.0,173.7 L635.5,170.8 L635.0,174.0 L634.5,178.2 L634.0,176.3 L633.5,186.2 L633.0,170.9 L632.5,172.1 L632.0,180.9 L631.5,170.8 L631.0,169.5 L630.5,169.7 L630.0,183.6 L629.5,169.9 L629.0,169.8 L628.5,172.9 L628.0,169.6 L627.5,184.7 L627.0,170.4 L626.5,178.9 L626.0,172.1 L625.5,171.8 L625.0,173.6 L624.5,171.2 L624.0,169.5 L623.5,186.8 L623.0,176.8 L622.5,178.9 L622.0,169.6 L621.5,169.7 L621.0,169.7 L620.5,172.7 L620.0,169.8 L619.5,169.7 L619.0,179.4 L618.5,184.7 L618.0,170.9 L617.5,169.4 L617.0,174.7 L616.5,169.8 L616.0,180.9 L615.5,171.2 L615.0,169.4 L614.5,181.5 L614.0,186.2 L613.5,169.1 L613.0,174.8 L612.5,169.4 L612.0,169.4 L611.5,178.0 L611.0,171.3 L610.5,169.6 L610.0,175.3 L609.5,172.2 L609.0,175.4 L608.5,179.1 L608.0,175.5 L607.5,181.5 L607.0,169.5 L606.5,179.7 L606.0,169.6 L605.5,180.4 L605.0,169.0 L604.5,170.4 L604.0,168.4 L603.5,168.8 L603.0,176.1Z" fill="#24443a"/>
<path d="M603.0,332.4 L603.5,333.1 L604.0,347.5 L604.5,342.5 L605.0,342.8 L605.5,329.2 L606.0,347.4 L606.5,343.7 L607.0,331.6 L607.5,347.7 L608.0,348.2 L608.5,339.8 L609.0,333.4 L609.5,334.0 L610.0,327.3 L610.5,334.9 L611.0,341.4 L611.5,340.0 L612.0,329.7 L612.5,338.4 L613.0,343.3 L613.5,339.1 L614.0,347.0 L614.5,327.8 L615.0,340.7 L615.5,346.7 L616.0,329.1 L616.5,332.8 L617.0,347.6 L617.5,339.9 L618.0,334.1 L618.5,334.2 L619.0,332.4 L619.5,348.2 L620.0,340.5 L620.5,348.1 L621.0,347.5 L621.5,348.0 L622.0,348.3 L622.5,348.4 L623.0,338.5 L623.5,348.4 L624.0,334.5 L624.5,331.5 L625.0,347.5 L625.5,348.1 L626.0,347.9 L626.5,343.3 L627.0,347.1 L627.5,348.0 L628.0,348.1 L628.5,348.1 L629.0,327.3 L629.5,347.4 L630.0,339.5 L630.5,338.3 L631.0,343.8 L631.5,345.3 L632.0,347.4 L632.5,347.6 L633.0,343.5 L633.5,347.6 L634.0,336.9 L634.5,342.4 L635.0,342.9 L635.5,335.2 L636.0,329.8 L636.5,328.6 L637.0,340.1 L637.5,332.7 L638.0,343.5 L638.5,348.0 L639.0,347.5 L639.5,348.3 L640.0,341.3 L640.5,336.8 L641.0,348.3 L641.5,336.8 L642.0,348.2 L642.5,336.8 L643.0,341.1 L643.5,341.6 L644.0,332.2 L644.5,346.8 L645.0,347.1 L645.5,329.8 L646.0,347.7 L646.5,347.4 L647.0,347.8 L647.5,340.3 L648.0,347.2 L648.5,342.4 L649.0,338.8 L649.5,347.8 L650.0,347.0 L650.5,337.7 L651.0,334.4 L651.5,345.0 L652.0,333.2 L652.5,342.5 L653.0,328.5 L653.5,329.4 L654.0,337.0 L654.5,347.2 L655.0,335.7 L655.5,347.8 L656.0,330.7 L656.5,347.7 L657.0,337.3 L657.5,347.5 L658.0,347.1 L658.5,347.2 L659.0,339.7 L659.5,340.6 L660.0,330.6 L660.5,340.6 L661.0,336.1 L661.5,346.6 L662.0,348.1 L662.5,347.7 L663.0,342.2 L663.5,334.0 L664.0,343.6 L664.5,348.1 L665.0,343.4 L665.5,340.8 L666.0,338.8 L666.5,332.6 L667.0,346.7 L667.5,338.9 L668.0,347.7 L668.5,339.3 L669.0,339.9 L669.5,343.7 L670.0,330.7 L670.5,344.1 L671.0,347.9 L671.5,343.8 L672.0,330.5 L672.5,330.7 L673.0,347.4 L673.5,344.3 L674.0,347.3 L674.5,341.5 L675.0,329.7 L675.5,335.4 L676.0,334.0 L676.5,333.3 L677.0,338.3 L677.5,344.9 L678.0,343.7 L678.5,347.3 L679.0,347.9 L679.5,328.4 L680.0,342.4 L680.5,333.9 L681.0,340.8 L681.5,332.2 L682.0,347.8 L682.5,347.5 L683.0,347.7 L683.5,342.6 L684.0,348.3 L684.5,337.4 L685.0,334.2 L685.5,340.3 L686.0,343.5 L686.5,346.7 L687.0,339.8 L687.5,327.3 L688.0,342.8 L688.5,347.9 L689.0,328.9 L689.5,348.0 L690.0,347.9 L690.5,347.7 L691.0,347.9 L691.5,347.9 L692.0,341.8 L692.5,344.1 L693.0,329.0 L693.5,336.2 L694.0,344.1 L694.5,348.3 L695.0,348.0 L695.5,330.9 L696.0,339.8 L696.5,348.3 L697.0,347.8 L697.5,343.5 L698.0,333.3 L698.0,383.7 L697.5,386.7 L697.0,392.3 L696.5,385.8 L696.0,372.0 L695.5,377.8 L695.0,375.1 L694.5,371.4 L694.0,378.3 L693.5,372.7 L693.0,390.1 L692.5,379.0 L692.0,384.3 L691.5,372.0 L691.0,371.5 L690.5,384.1 L690.0,384.6 L689.5,371.4 L689.0,371.5 L688.5,384.4 L688.0,371.5 L687.5,377.9 L687.0,380.2 L686.5,372.2 L686.0,376.7 L685.5,373.1 L685.0,381.6 L684.5,381.4 L684.0,386.9 L683.5,372.4 L683.0,375.8 L682.5,378.9 L682.0,373.1 L681.5,373.0 L681.0,377.0 L680.5,371.4 L680.0,382.9 L679.5,371.4 L679.0,380.6 L678.5,384.6 L678.0,387.5 L677.5,382.5 L677.0,376.5 L676.5,385.6 L676.0,388.5 L675.5,371.6 L675.0,372.2 L674.5,378.2 L674.0,392.3 L673.5,384.3 L673.0,371.7 L672.5,385.0 L672.0,382.0 L671.5,371.7 L671.0,371.3 L670.5,379.2 L670.0,372.1 L669.5,372.4 L669.0,385.2 L668.5,371.6 L668.0,379.4 L667.5,371.7 L667.0,375.1 L666.5,386.3 L666.0,377.6 L665.5,382.7 L665.0,379.7 L664.5,383.0 L664.0,391.1 L663.5,371.8 L663.0,376.1 L662.5,379.6 L662.0,378.0 L661.5,386.6 L661.0,390.2 L660.5,377.9 L660.0,376.1 L659.5,386.3 L659.0,378.3 L658.5,381.1 L658.0,390.7 L657.5,371.5 L657.0,371.4 L656.5,374.9 L656.0,379.1 L655.5,385.3 L655.0,381.1 L654.5,371.9 L654.0,374.2 L653.5,389.5 L653.0,377.2 L652.5,378.6 L652.0,380.2 L651.5,382.1 L651.0,384.5 L650.5,385.3 L650.0,390.9 L649.5,380.3 L649.0,389.1 L648.5,389.8 L648.0,383.5 L647.5,378.3 L647.0,378.0 L646.5,381.7 L646.0,380.0 L645.5,388.7 L645.0,377.9 L644.5,385.7 L644.0,375.4 L643.5,372.3 L643.0,392.2 L642.5,373.2 L642.0,371.9 L641.5,392.0 L641.0,377.8 L640.5,378.3 L640.0,371.7 L639.5,377.6 L639.0,378.5 L638.5,376.2 L638.0,372.2 L637.5,371.9 L637.0,388.0 L636.5,371.6 L636.0,380.3 L635.5,381.6 L635.0,382.9 L634.5,379.5 L634.0,384.9 L633.5,383.6 L633.0,372.9 L632.5,380.3 L632.0,381.9 L631.5,383.5 L631.0,389.6 L630.5,389.3 L630.0,372.5 L629.5,380.9 L629.0,371.7 L628.5,380.7 L628.0,371.5 L627.5,371.5 L627.0,383.5 L626.5,379.5 L626.0,376.0 L625.5,371.6 L625.0,371.6 L624.5,372.0 L624.0,376.7 L623.5,379.1 L623.0,371.7 L622.5,372.0 L622.0,382.4 L621.5,384.1 L621.0,392.3 L620.5,387.6 L620.0,380.9 L619.5,371.6 L619.0,371.8 L618.5,371.8 L618.0,376.6 L617.5,372.6 L617.0,372.3 L616.5,372.9 L616.0,372.9 L615.5,383.1 L615.0,385.8 L614.5,372.8 L614.0,372.0 L613.5,372.4 L613.0,376.3 L612.5,383.5 L612.0,387.9 L611.5,377.9 L611.0,387.5 L610.5,371.8 L610.0,382.6 L609.5,378.8 L609.0,381.1 L608.5,372.5 L608.0,392.3 L607.5,376.7 L607.0,371.6 L606.5,386.5 L606.0,371.1 L605.5,383.8 L605.0,379.3 L604.5,376.6 L604.0,382.3 L603.5,389.8 L603.0,375.2Z" fill="#7f978a"/>
<path d="M603.0,332.6 L603.5,336.8 L604.0,347.5 L604.5,343.3 L605.0,346.4 L605.5,331.9 L606.0,347.4 L606.5,345.3 L607.0,334.2 L607.5,347.7 L608.0,348.2 L608.5,340.7 L609.0,337.0 L609.5,337.9 L610.0,330.3 L610.5,338.4 L611.0,343.8 L611.5,344.2 L612.0,334.2 L612.5,343.0 L613.0,344.4 L613.5,339.9 L614.0,347.0 L614.5,331.3 L615.0,343.9 L615.5,346.7 L616.0,332.2 L616.5,336.5 L617.0,347.6 L617.5,341.2 L618.0,334.7 L618.5,335.4 L619.0,334.5 L619.5,348.2 L620.0,340.9 L620.5,348.1 L621.0,347.5 L621.5,348.0 L622.0,348.3 L622.5,348.4 L623.0,339.0 L623.5,348.4 L624.0,339.0 L624.5,335.0 L625.0,347.5 L625.5,348.1 L626.0,347.9 L626.5,344.1 L627.0,347.1 L627.5,348.0 L628.0,348.1 L628.5,348.1 L629.0,330.4 L629.5,347.4 L630.0,342.6 L630.5,339.6 L631.0,343.8 L631.5,345.8 L632.0,347.4 L632.5,347.6 L633.0,345.0 L633.5,347.6 L634.0,339.0 L634.5,342.7 L635.0,343.8 L635.5,337.0 L636.0,332.9 L636.5,330.4 L637.0,340.6 L637.5,336.0 L638.0,345.6 L638.5,348.0 L639.0,347.5 L639.5,348.3 L640.0,343.3 L640.5,338.7 L641.0,348.3 L641.5,341.6 L642.0,348.2 L642.5,339.3 L643.0,345.1 L643.5,344.0 L644.0,336.8 L644.5,346.8 L645.0,347.1 L645.5,332.7 L646.0,347.7 L646.5,347.4 L647.0,347.8 L647.5,340.9 L648.0,347.2 L648.5,345.0 L649.0,343.5 L649.5,347.8 L650.0,347.0 L650.5,339.7 L651.0,337.2 L651.5,345.1 L652.0,334.1 L652.5,344.5 L653.0,332.0 L653.5,331.0 L654.0,340.8 L654.5,347.2 L655.0,340.6 L655.5,347.8 L656.0,333.9 L656.5,347.7 L657.0,341.8 L657.5,347.5 L658.0,347.1 L658.5,347.2 L659.0,341.8 L659.5,343.0 L660.0,331.0 L660.5,344.8 L661.0,338.5 L661.5,346.6 L662.0,348.1 L662.5,347.7 L663.0,345.6 L663.5,334.6 L664.0,346.0 L664.5,348.1 L665.0,346.1 L665.5,345.1 L666.0,341.2 L666.5,333.0 L667.0,346.7 L667.5,340.9 L668.0,347.7 L668.5,343.5 L669.0,341.4 L669.5,344.9 L670.0,331.3 L670.5,345.9 L671.0,347.9 L671.5,345.3 L672.0,332.7 L672.5,332.3 L673.0,347.4 L673.5,346.1 L674.0,347.3 L674.5,345.7 L675.0,334.3 L675.5,340.1 L676.0,338.4 L676.5,338.2 L677.0,341.7 L677.5,345.8 L678.0,346.1 L678.5,347.3 L679.0,347.9 L679.5,332.8 L680.0,345.2 L680.5,335.9 L681.0,341.5 L681.5,332.7 L682.0,347.8 L682.5,347.5 L683.0,347.7 L683.5,346.5 L684.0,348.3 L684.5,338.1 L685.0,335.8 L685.5,342.3 L686.0,345.9 L686.5,346.7 L687.0,342.5 L687.5,329.8 L688.0,345.5 L688.5,347.9 L689.0,332.3 L689.5,348.0 L690.0,347.9 L690.5,347.7 L691.0,347.9 L691.5,347.9 L692.0,344.6 L692.5,344.4 L693.0,333.1 L693.5,340.6 L694.0,344.7 L694.5,348.3 L695.0,348.0 L695.5,335.4 L696.0,344.4 L696.5,348.3 L697.0,347.8 L697.5,345.7 L698.0,337.4 L698.0,383.0 L697.5,385.9 L697.0,389.0 L696.5,380.9 L696.0,372.0 L695.5,375.5 L695.0,374.6 L694.5,371.4 L694.0,376.7 L693.5,372.7 L693.0,389.3 L692.5,374.7 L692.0,382.7 L691.5,372.0 L691.0,371.5 L690.5,382.2 L690.0,383.6 L689.5,371.4 L689.0,371.5 L688.5,383.6 L688.0,371.5 L687.5,376.2 L687.0,376.4 L686.5,372.2 L686.0,374.7 L685.5,373.1 L685.0,378.1 L684.5,380.6 L684.0,386.4 L683.5,372.4 L683.0,373.7 L682.5,378.7 L682.0,373.1 L681.5,373.0 L681.0,373.7 L680.5,371.4 L680.0,381.7 L679.5,371.4 L679.0,376.2 L678.5,383.8 L678.0,383.0 L677.5,377.7 L677.0,375.0 L676.5,380.7 L676.0,384.7 L675.5,371.6 L675.0,372.2 L674.5,373.4 L674.0,389.1 L673.5,381.8 L673.0,371.7 L672.5,384.3 L672.0,378.0 L671.5,371.7 L671.0,371.3 L670.5,376.8 L670.0,372.1 L669.5,372.4 L669.0,382.5 L668.5,371.6 L668.0,374.6 L667.5,371.7 L667.0,374.5 L666.5,384.7 L666.0,373.4 L665.5,381.7 L665.0,379.7 L664.5,382.3 L664.0,386.9 L663.5,371.8 L663.0,373.8 L662.5,377.0 L662.0,376.8 L661.5,383.0 L661.0,389.3 L660.5,376.7 L660.0,374.7 L659.5,383.5 L659.0,377.5 L658.5,378.2 L658.0,385.9 L657.5,371.5 L657.0,371.4 L656.5,374.4 L656.0,377.1 L655.5,383.6 L655.0,377.5 L654.5,371.9 L654.0,374.0 L653.5,386.1 L653.0,374.0 L652.5,374.0 L652.0,375.3 L651.5,378.8 L651.0,382.8 L650.5,381.9 L650.0,389.0 L649.5,378.0 L649.0,388.5 L648.5,386.1 L648.0,381.4 L647.5,376.0 L647.0,374.7 L646.5,379.9 L646.0,376.6 L645.5,383.8 L645.0,377.7 L644.5,381.0 L644.0,374.1 L643.5,372.3 L643.0,389.0 L642.5,373.1 L642.0,371.9 L641.5,388.0 L641.0,375.6 L640.5,373.4 L640.0,371.7 L639.5,375.6 L639.0,378.2 L638.5,373.7 L638.0,372.2 L637.5,371.9 L637.0,386.0 L636.5,371.6 L636.0,378.8 L635.5,376.8 L635.0,382.1 L634.5,377.3 L634.0,384.5 L633.5,378.6 L633.0,372.9 L632.5,375.5 L632.0,377.9 L631.5,381.7 L631.0,386.6 L630.5,387.5 L630.0,372.5 L629.5,378.7 L629.0,371.7 L628.5,377.4 L628.0,371.5 L627.5,371.5 L627.0,379.8 L626.5,375.6 L626.0,375.5 L625.5,371.6 L625.0,371.6 L624.5,372.0 L624.0,374.8 L623.5,374.2 L623.0,371.7 L622.5,372.0 L622.0,379.8 L621.5,379.8 L621.0,388.7 L620.5,386.9 L620.0,378.4 L619.5,371.6 L619.0,371.8 L618.5,371.8 L618.0,374.5 L617.5,372.6 L617.0,372.3 L616.5,372.9 L616.0,372.9 L615.5,378.7 L615.0,384.7 L614.5,372.8 L614.0,372.0 L613.5,372.4 L613.0,374.6 L612.5,379.6 L612.0,386.9 L611.5,376.0 L611.0,386.5 L610.5,371.8 L610.0,380.3 L609.5,376.8 L609.0,379.7 L608.5,372.5 L608.0,389.0 L607.5,375.8 L607.0,371.6 L606.5,383.5 L606.0,371.1 L605.5,380.3 L605.0,376.1 L604.5,375.6 L604.0,379.0 L603.5,388.7 L603.0,373.8Z" fill="#24443a"/>
<rect x="600" y="157" width="99" height="1" fill="#1a3329"/>
<rect x="600" y="359.3" width="99" height="1" fill="#1a3329"/>
</svg>
<div class="ab" style="left:369px;top:115px;width:71px;height:12px;background:#4b4b4b;border-top:0.7px solid #e8e8e8"></div>
<div class="ab" style="left:370px;top:116px;width:3px;height:11px;background:repeating-linear-gradient(#5a5a5a 0 1px,#4b4b4b 1px 2px)"></div>
<svg class="ab" style="left:374px;top:116px" width="12" height="11"><path d="M0.5,10 L9.5,1.5 L9.5,10Z" fill="#8a8a8a"/></svg>
<svg class="ab" style="left:385px;top:115px" width="14" height="14"><circle cx="7" cy="7.3" r="4.7" fill="none" stroke="#9a9a9a" stroke-width="1"/><line x1="7" y1="2.8" x2="7" y2="6" stroke="#9a9a9a" stroke-width="1"/></svg>
<div class="t" style="left:399.35px;top:119.00px;font-size:6.25px;color:#3b8be0;transform:scaleX(1.122);transform-origin:0 0;">+0</div>
<div class="t" style="left:408.65px;top:119.00px;font-size:7.12px;color:#8f8f8f;transform:scaleX(0.882);transform-origin:0 0;">dB</div>
<div class="ab" style="left:429.5px;top:116px;width:0.8px;height:11px;background:#6a6a6a"></div>
<svg class="ab" style="left:430px;top:117px" width="10" height="10"><path d="M2.5,7.6 L4.6,5.5" stroke="#d0d0d0" stroke-width="0.9"/><path d="M3.8,4.2 L6.4,2.6 L7.9,4.1 L6.3,6.7Z" fill="#d0d0d0"/></svg>
<div class="ab" style="left:23.9px;top:126.5px;width:579.1px;height:271.5px;box-shadow:0 3px 6px rgba(0,0,0,0.16)"></div>
<div class="ab" style="left:22.9px;top:126.5px;width:581.1px;height:271.5px;background:#232323;border:1px solid #1c1c1c;border-left-color:#3a3a3a;border-radius:2px"></div>
<div class="ab" style="left:22.9px;top:126.5px;width:581.1px;height:17px;background:#ffffff;border-radius:2px 2px 0 0"></div>
<div class="t" style="left:27.91px;top:131.00px;font-size:7.41px;color:#141414;transform:scaleX(0.987);transform-origin:0 0;-webkit-text-stroke:0.25px currentColor">Effect - Graphic Equalizer (30 Bands)</div>
<div class="ab" style="left:592.3px;top:130.6px;width:10.7px;height:10.2px;background:#d2454c"></div>
<svg class="ab" style="left:592.3px;top:130.6px" width="11" height="10"><path d="M4.0,3.7 L6.8,6.5 M6.8,3.7 L4.0,6.5" stroke="#fff" stroke-width="1.15"/></svg>
<div class="t" style="left:31.72px;top:155.00px;font-size:6.83px;color:#8a8a8a;transform:scaleX(0.880);transform-origin:0 0;">Presets:</div>
<div class="ab" style="left:55.5px;top:152.5px;width:117px;height:11px;background:#1b1b1b;border-radius:2px"></div>
<div class="t" style="left:59.09px;top:155.00px;font-size:6.83px;color:#d0d0d0;transform:scaleX(0.998);transform-origin:0 0;">(Default)</div>
<svg class="ab" style="left:164px;top:155px" width="6" height="5"><path d="M1,1.5 L3,3.5 L5,1.5" stroke="#9a9a9a" stroke-width="0.9" fill="none"/></svg>
<svg class="ab" style="left:0;top:0" width="700" height="465"><rect x="179" y="157.9" width="9" height="3" rx="0.3" fill="#cfcfcf"/><path d="M183.5,153 V157.2" stroke="#232323" stroke-width="2.6"/><path d="M181,155.5 L183.5,158.8 L186,155.5" fill="#232323"/><path d="M183.5,153 V157" stroke="#d4d4d4" stroke-width="1.2"/><path d="M181.6,155.6 H185.4 L183.5,158.4Z" fill="#d4d4d4"/></svg>
<svg class="ab" style="left:0;top:0" width="700" height="465"><path d="M193.2,154.4 H200.8" stroke="#7a7a7a" stroke-width="1.3"/><rect x="196" y="153.2" width="2" height="0.8" fill="#7a7a7a"/><path d="M194,155.3 L194.6,161.8 H199.4 L200,155.3" stroke="#6c6c6c" stroke-width="1" fill="#3a3a3a"/><path d="M196,156.2 V161 M198,156.2 V161" stroke="#5a5a5a" stroke-width="0.7"/></svg>
<div class="ab" style="left:205.7px;top:150px;width:0.8px;height:12px;background:#333"></div>
<svg class="ab" style="left:210px;top:152px" width="11" height="11"><path d="M5.50,1.30 L6.62,4.06 L9.59,4.27 L7.31,6.19 L8.03,9.08 L5.50,7.50 L2.97,9.08 L3.69,6.19 L1.41,4.27 L4.38,4.06Z" fill="#cfcfcf"/></svg>
<svg class="ab" style="left:570px;top:148px" width="16" height="16"><circle cx="5.6" cy="6.9" r="1" fill="#d8d8d8"/><path d="M5.8,7 L8.6,9.4" stroke="#b0b0b0" stroke-width="0.9"/><path d="M10.5,7.5 V12.7" stroke="#a8a8a8" stroke-width="0.9"/><circle cx="10.5" cy="7.5" r="0.8" fill="#e0e0e0"/><circle cx="10.5" cy="12.7" r="0.8" fill="#e0e0e0"/></svg>
<svg class="ab" style="left:586px;top:152px" width="12" height="12"><circle cx="5.8" cy="5.8" r="4.4" fill="none" stroke="#cfcfcf" stroke-width="0.9"/><rect x="5.3" y="4.7" width="1" height="3.6" fill="#cfcfcf"/><rect x="5.3" y="3" width="1" height="1" fill="#cfcfcf"/></svg>
<div class="ab" style="left:32px;top:168.3px;width:563px;height:1px;background:#2e2e2e"></div>
<div class="ab" style="left:35.4px;top:177.6px;width:556.6px;height:134.8px;border:1px solid #2e2e2e;border-radius:2.5px"></div>
<div class="t" style="left:53.19px;top:187.00px;font-size:6.83px;color:#b0b0b0;transform:scaleX(1.000);transform-origin:0 0;">&lt;31</div>
<div class="t" style="left:56.97px;top:287.00px;font-size:7.27px;color:#3b8be0;transform:scaleX(1.000);transform-origin:0 0;">0</div>
<div class="t" style="left:70.36px;top:187.00px;font-size:6.83px;color:#b0b0b0;transform:scaleX(1.000);transform-origin:0 0;">40</div>
<div class="t" style="left:72.07px;top:287.00px;font-size:7.27px;color:#3b8be0;transform:scaleX(1.000);transform-origin:0 0;">0</div>
<div class="t" style="left:87.85px;top:187.00px;font-size:6.83px;color:#b0b0b0;transform:scaleX(1.000);transform-origin:0 0;">50</div>
<div class="t" style="left:89.63px;top:287.00px;font-size:7.27px;color:#3b8be0;transform:scaleX(1.000);transform-origin:0 0;">0</div>
<div class="t" style="left:105.39px;top:187.00px;font-size:6.83px;color:#b0b0b0;transform:scaleX(1.000);transform-origin:0 0;">63</div>
<div class="t" style="left:107.19px;top:287.00px;font-size:7.27px;color:#3b8be0;transform:scaleX(1.000);transform-origin:0 0;">0</div>
<div class="t" style="left:122.95px;top:187.00px;font-size:6.83px;color:#b0b0b0;transform:scaleX(1.000);transform-origin:0 0;">80</div>
<div class="t" style="left:124.75px;top:287.00px;font-size:7.27px;color:#3b8be0;transform:scaleX(1.000);transform-origin:0 0;">0</div>
<div class="t" style="left:138.52px;top:187.00px;font-size:6.83px;color:#b0b0b0;transform:scaleX(1.000);transform-origin:0 0;">100</div>
<div class="t" style="left:142.31px;top:287.00px;font-size:7.27px;color:#3b8be0;transform:scaleX(1.000);transform-origin:0 0;">0</div>
<div class="t" style="left:156.09px;top:187.00px;font-size:6.83px;color:#b0b0b0;transform:scaleX(1.000);transform-origin:0 0;">125</div>
<div class="t" style="left:159.87px;top:287.00px;font-size:7.27px;color:#3b8be0;transform:scaleX(1.000);transform-origin:0 0;">0</div>
<div class="t" style="left:173.64px;top:187.00px;font-size:6.83px;color:#b0b0b0;transform:scaleX(1.000);transform-origin:0 0;">160</div>
<div class="t" style="left:177.43px;top:287.00px;font-size:7.27px;color:#3b8be0;transform:scaleX(1.000);transform-origin:0 0;">0</div>
<div class="t" style="left:191.28px;top:187.00px;font-size:6.83px;color:#b0b0b0;transform:scaleX(1.000);transform-origin:0 0;">200</div>
<div class="t" style="left:194.99px;top:287.00px;font-size:7.27px;color:#3b8be0;transform:scaleX(1.000);transform-origin:0 0;">0</div>
<div class="t" style="left:208.84px;top:187.00px;font-size:6.83px;color:#b0b0b0;transform:scaleX(1.000);transform-origin:0 0;">250</div>
<div class="t" style="left:212.55px;top:287.00px;font-size:7.27px;color:#3b8be0;transform:scaleX(1.000);transform-origin:0 0;">0</div>
<div class="t" style="left:226.45px;top:187.00px;font-size:6.83px;color:#b0b0b0;transform:scaleX(1.000);transform-origin:0 0;">315</div>
<div class="t" style="left:230.11px;top:287.00px;font-size:7.27px;color:#3b8be0;transform:scaleX(1.000);transform-origin:0 0;">0</div>
<div class="t" style="left:244.06px;top:187.00px;font-size:6.83px;color:#b0b0b0;transform:scaleX(1.000);transform-origin:0 0;">400</div>
<div class="t" style="left:247.67px;top:287.00px;font-size:7.27px;color:#3b8be0;transform:scaleX(1.000);transform-origin:0 0;">0</div>
<div class="t" style="left:261.56px;top:187.00px;font-size:6.83px;color:#b0b0b0;transform:scaleX(1.000);transform-origin:0 0;">500</div>
<div class="t" style="left:265.23px;top:287.00px;font-size:7.27px;color:#3b8be0;transform:scaleX(1.000);transform-origin:0 0;">0</div>
<div class="t" style="left:279.08px;top:187.00px;font-size:6.83px;color:#b0b0b0;transform:scaleX(1.000);transform-origin:0 0;">630</div>
<div class="t" style="left:282.79px;top:287.00px;font-size:7.27px;color:#3b8be0;transform:scaleX(1.000);transform-origin:0 0;">0</div>
<div class="t" style="left:296.66px;top:187.00px;font-size:6.83px;color:#b0b0b0;transform:scaleX(1.000);transform-origin:0 0;">800</div>
<div class="t" style="left:300.35px;top:287.00px;font-size:7.27px;color:#3b8be0;transform:scaleX(1.000);transform-origin:0 0;">0</div>
<div class="t" style="left:316.54px;top:187.00px;font-size:6.83px;color:#b0b0b0;transform:scaleX(0.880);transform-origin:0 0;">1k</div>
<div class="t" style="left:317.91px;top:287.00px;font-size:7.27px;color:#3b8be0;transform:scaleX(1.000);transform-origin:0 0;">0</div>
<div class="t" style="left:329.93px;top:187.00px;font-size:6.83px;color:#b0b0b0;transform:scaleX(0.880);transform-origin:0 0;">1.25k</div>
<div class="t" style="left:335.47px;top:287.00px;font-size:7.27px;color:#3b8be0;transform:scaleX(1.000);transform-origin:0 0;">0</div>
<div class="t" style="left:349.15px;top:187.00px;font-size:6.83px;color:#b0b0b0;transform:scaleX(0.880);transform-origin:0 0;">1.6k</div>
<div class="t" style="left:353.03px;top:287.00px;font-size:7.27px;color:#3b8be0;transform:scaleX(1.000);transform-origin:0 0;">0</div>
<div class="t" style="left:369.30px;top:187.00px;font-size:6.83px;color:#b0b0b0;transform:scaleX(0.880);transform-origin:0 0;">2k</div>
<div class="t" style="left:370.59px;top:287.00px;font-size:7.27px;color:#3b8be0;transform:scaleX(1.000);transform-origin:0 0;">0</div>
<div class="t" style="left:384.35px;top:187.00px;font-size:6.83px;color:#b0b0b0;transform:scaleX(0.880);transform-origin:0 0;">2.5k</div>
<div class="t" style="left:388.15px;top:287.00px;font-size:7.27px;color:#3b8be0;transform:scaleX(1.000);transform-origin:0 0;">0</div>
<div class="t" style="left:401.94px;top:187.00px;font-size:6.83px;color:#b0b0b0;transform:scaleX(0.880);transform-origin:0 0;">3.2k</div>
<div class="t" style="left:405.71px;top:287.00px;font-size:7.27px;color:#3b8be0;transform:scaleX(1.000);transform-origin:0 0;">0</div>
<div class="t" style="left:422.07px;top:187.00px;font-size:6.83px;color:#b0b0b0;transform:scaleX(0.880);transform-origin:0 0;">4k</div>
<div class="t" style="left:423.27px;top:287.00px;font-size:7.27px;color:#3b8be0;transform:scaleX(1.000);transform-origin:0 0;">0</div>
<div class="t" style="left:439.57px;top:187.00px;font-size:6.83px;color:#b0b0b0;transform:scaleX(0.880);transform-origin:0 0;">5k</div>
<div class="t" style="left:440.83px;top:287.00px;font-size:7.27px;color:#3b8be0;transform:scaleX(1.000);transform-origin:0 0;">0</div>
<div class="t" style="left:454.59px;top:187.00px;font-size:6.83px;color:#b0b0b0;transform:scaleX(0.880);transform-origin:0 0;">6.3k</div>
<div class="t" style="left:458.39px;top:287.00px;font-size:7.27px;color:#3b8be0;transform:scaleX(1.000);transform-origin:0 0;">0</div>
<div class="t" style="left:474.67px;top:187.00px;font-size:6.83px;color:#b0b0b0;transform:scaleX(0.880);transform-origin:0 0;">8k</div>
<div class="t" style="left:475.95px;top:287.00px;font-size:7.27px;color:#3b8be0;transform:scaleX(1.000);transform-origin:0 0;">0</div>
<div class="t" style="left:490.48px;top:187.00px;font-size:6.83px;color:#b0b0b0;transform:scaleX(0.880);transform-origin:0 0;">10k</div>
<div class="t" style="left:493.51px;top:287.00px;font-size:7.27px;color:#3b8be0;transform:scaleX(1.000);transform-origin:0 0;">0</div>
<div class="t" style="left:505.53px;top:187.00px;font-size:6.83px;color:#b0b0b0;transform:scaleX(0.880);transform-origin:0 0;">12.5k</div>
<div class="t" style="left:511.07px;top:287.00px;font-size:7.27px;color:#3b8be0;transform:scaleX(1.000);transform-origin:0 0;">0</div>
<div class="t" style="left:525.60px;top:187.00px;font-size:6.83px;color:#b0b0b0;transform:scaleX(0.880);transform-origin:0 0;">16k</div>
<div class="t" style="left:528.63px;top:287.00px;font-size:7.27px;color:#3b8be0;transform:scaleX(1.000);transform-origin:0 0;">0</div>
<div class="t" style="left:543.23px;top:187.00px;font-size:6.83px;color:#b0b0b0;transform:scaleX(0.880);transform-origin:0 0;">20k</div>
<div class="t" style="left:546.19px;top:287.00px;font-size:7.27px;color:#3b8be0;transform:scaleX(1.000);transform-origin:0 0;">0</div>
<div class="t" style="left:556.89px;top:187.00px;font-size:6.83px;color:#b0b0b0;transform:scaleX(0.920);transform-origin:0 0;">&gt;25k Hz</div>
<div class="t" style="left:566.47px;top:287.00px;font-size:7.27px;color:#3b8be0;transform:scaleX(1.000);transform-origin:0 0;">0</div>
<svg class="ab" style="left:0;top:0" width="700" height="465"><defs><pattern id="hatch" x="0" y="0" width="700" height="2" patternUnits="userSpaceOnUse"><rect x="0" y="0" width="700" height="1" fill="#626262"/></pattern></defs><rect x="57.70" y="202" width="2.6" height="75.5" fill="#4c4c4c"/><rect x="57.70" y="202" width="2.6" height="75.5" fill="url(#hatch)"/><rect x="56.20" y="207.90" width="5.6" height="1" fill="#8c8c8c"/><rect x="56.20" y="215.65" width="5.6" height="1" fill="#8c8c8c"/><rect x="56.20" y="223.40" width="5.6" height="1" fill="#8c8c8c"/><rect x="56.20" y="231.15" width="5.6" height="1" fill="#8c8c8c"/><rect x="56.20" y="246.65" width="5.6" height="1" fill="#8c8c8c"/><rect x="56.20" y="254.40" width="5.6" height="1" fill="#8c8c8c"/><rect x="56.20" y="262.15" width="5.6" height="1" fill="#8c8c8c"/><rect x="56.20" y="269.90" width="5.6" height="1" fill="#8c8c8c"/><circle cx="59.00" cy="239.40" r="2.65" fill="#232323" stroke="#b4b4b4" stroke-width="1.35"/><rect x="72.80" y="202" width="2.6" height="75.5" fill="#4c4c4c"/><rect x="72.80" y="202" width="2.6" height="75.5" fill="url(#hatch)"/><rect x="71.30" y="207.90" width="5.6" height="1" fill="#8c8c8c"/><rect x="71.30" y="215.65" width="5.6" height="1" fill="#8c8c8c"/><rect x="71.30" y="223.40" width="5.6" height="1" fill="#8c8c8c"/><rect x="71.30" y="231.15" width="5.6" height="1" fill="#8c8c8c"/><rect x="71.30" y="246.65" width="5.6" height="1" fill="#8c8c8c"/><rect x="71.30" y="254.40" width="5.6" height="1" fill="#8c8c8c"/><rect x="71.30" y="262.15" width="5.6" height="1" fill="#8c8c8c"/><rect x="71.30" y="269.90" width="5.6" height="1" fill="#8c8c8c"/><circle cx="74.10" cy="239.40" r="2.65" fill="#232323" stroke="#b4b4b4" stroke-width="1.35"/><rect x="90.36" y="202" width="2.6" height="75.5" fill="#4c4c4c"/><rect x="90.36" y="202" width="2.6" height="75.5" fill="url(#hatch)"/><rect x="88.86" y="207.90" width="5.6" height="1" fill="#8c8c8c"/><rect x="88.86" y="215.65" width="5.6" height="1" fill="#8c8c8c"/><rect x="88.86" y="223.40" width="5.6" height="1" fill="#8c8c8c"/><rect x="88.86" y="231.15" width="5.6" height="1" fill="#8c8c8c"/><rect x="88.86" y="246.65" width="5.6" height="1" fill="#8c8c8c"/><rect x="88.86" y="254.40" width="5.6" height="1" fill="#8c8c8c"/><rect x="88.86" y="262.15" width="5.6" height="1" fill="#8c8c8c"/><rect x="88.86" y="269.90" width="5.6" height="1" fill="#8c8c8c"/><circle cx="91.66" cy="239.40" r="2.65" fill="#232323" stroke="#b4b4b4" stroke-width="1.35"/><rect x="107.92" y="202" width="2.6" height="75.5" fill="#4c4c4c"/><rect x="107.92" y="202" width="2.6" height="75.5" fill="url(#hatch)"/><rect x="106.42" y="207.90" width="5.6" height="1" fill="#8c8c8c"/><rect x="106.42" y="215.65" width="5.6" height="1" fill="#8c8c8c"/><rect x="106.42" y="223.40" width="5.6" height="1" fill="#8c8c8c"/><rect x="106.42" y="231.15" width="5.6" height="1" fill="#8c8c8c"/><rect x="106.42" y="246.65" width="5.6" height="1" fill="#8c8c8c"/><rect x="106.42" y="254.40" width="5.6" height="1" fill="#8c8c8c"/><rect x="106.42" y="262.15" width="5.6" height="1" fill="#8c8c8c"/><rect x="106.42" y="269.90" width="5.6" height="1" fill="#8c8c8c"/><circle cx="109.22" cy="239.40" r="2.65" fill="#232323" stroke="#b4b4b4" stroke-width="1.35"/><rect x="125.48" y="202" width="2.6" height="75.5" fill="#4c4c4c"/><rect x="125.48" y="202" width="2.6" height="75.5" fill="url(#hatch)"/><rect x="123.98" y="207.90" width="5.6" height="1" fill="#8c8c8c"/><rect x="123.98" y="215.65" width="5.6" height="1" fill="#8c8c8c"/><rect x="123.98" y="223.40" width="5.6" height="1" fill="#8c8c8c"/><rect x="123.98" y="231.15" width="5.6" height="1" fill="#8c8c8c"/><rect x="123.98" y="246.65" width="5.6" height="1" fill="#8c8c8c"/><rect x="123.98" y="254.40" width="5.6" height="1" fill="#8c8c8c"/><rect x="123.98" y="262.15" width="5.6" height="1" fill="#8c8c8c"/><rect x="123.98" y="269.90" width="5.6" height="1" fill="#8c8c8c"/><circle cx="126.78" cy="239.40" r="2.65" fill="#232323" stroke="#b4b4b4" stroke-width="1.35"/><rect x="143.04" y="202" width="2.6" height="75.5" fill="#4c4c4c"/><rect x="143.04" y="202" width="2.6" height="75.5" fill="url(#hatch)"/><rect x="141.54" y="207.90" width="5.6" height="1" fill="#8c8c8c"/><rect x="141.54" y="215.65" width="5.6" height="1" fill="#8c8c8c"/><rect x="141.54" y="223.40" width="5.6" height="1" fill="#8c8c8c"/><rect x="141.54" y="231.15" width="5.6" height="1" fill="#8c8c8c"/><rect x="141.54" y="246.65" width="5.6" height="1" fill="#8c8c8c"/><rect x="141.54" y="254.40" width="5.6" height="1" fill="#8c8c8c"/><rect x="141.54" y="262.15" width="5.6" height="1" fill="#8c8c8c"/><rect x="141.54" y="269.90" width="5.6" height="1" fill="#8c8c8c"/><circle cx="144.34" cy="239.40" r="2.65" fill="#232323" stroke="#b4b4b4" stroke-width="1.35"/><rect x="160.60" y="202" width="2.6" height="75.5" fill="#4c4c4c"/><rect x="160.60" y="202" width="2.6" height="75.5" fill="url(#hatch)"/><rect x="159.10" y="207.90" width="5.6" height="1" fill="#8c8c8c"/><rect x="159.10" y="215.65" width="5.6" height="1" fill="#8c8c8c"/><rect x="159.10" y="223.40" width="5.6" height="1" fill="#8c8c8c"/><rect x="159.10" y="231.15" width="5.6" height="1" fill="#8c8c8c"/><rect x="159.10" y="246.65" width="5.6" height="1" fill="#8c8c8c"/><rect x="159.10" y="254.40" width="5.6" height="1" fill="#8c8c8c"/><rect x="159.10" y="262.15" width="5.6" height="1" fill="#8c8c8c"/><rect x="159.10" y="269.90" width="5.6" height="1" fill="#8c8c8c"/><circle cx="161.90" cy="239.40" r="2.65" fill="#232323" stroke="#b4b4b4" stroke-width="1.35"/><rect x="178.16" y="202" width="2.6" height="75.5" fill="#4c4c4c"/><rect x="178.16" y="202" width="2.6" height="75.5" fill="url(#hatch)"/><rect x="176.66" y="207.90" width="5.6" height="1" fill="#8c8c8c"/><rect x="176.66" y="215.65" width="5.6" height="1" fill="#8c8c8c"/><rect x="176.66" y="223.40" width="5.6" height="1" fill="#8c8c8c"/><rect x="176.66" y="231.15" width="5.6" height="1" fill="#8c8c8c"/><rect x="176.66" y="246.65" width="5.6" height="1" fill="#8c8c8c"/><rect x="176.66" y="254.40" width="5.6" height="1" fill="#8c8c8c"/><rect x="176.66" y="262.15" width="5.6" height="1" fill="#8c8c8c"/><rect x="176.66" y="269.90" width="5.6" height="1" fill="#8c8c8c"/><circle cx="179.46" cy="239.40" r="2.65" fill="#232323" stroke="#b4b4b4" stroke-width="1.35"/><rect x="195.72" y="202" width="2.6" height="75.5" fill="#4c4c4c"/><rect x="195.72" y="202" width="2.6" height="75.5" fill="url(#hatch)"/><rect x="194.22" y="207.90" width="5.6" height="1" fill="#8c8c8c"/><rect x="194.22" y="215.65" width="5.6" height="1" fill="#8c8c8c"/><rect x="194.22" y="223.40" width="5.6" height="1" fill="#8c8c8c"/><rect x="194.22" y="231.15" width="5.6" height="1" fill="#8c8c8c"/><rect x="194.22" y="246.65" width="5.6" height="1" fill="#8c8c8c"/><rect x="194.22" y="254.40" width="5.6" height="1" fill="#8c8c8c"/><rect x="194.22" y="262.15" width="5.6" height="1" fill="#8c8c8c"/><rect x="194.22" y="269.90" width="5.6" height="1" fill="#8c8c8c"/><circle cx="197.02" cy="239.40" r="2.65" fill="#232323" stroke="#b4b4b4" stroke-width="1.35"/><rect x="213.28" y="202" width="2.6" height="75.5" fill="#4c4c4c"/><rect x="213.28" y="202" width="2.6" height="75.5" fill="url(#hatch)"/><rect x="211.78" y="207.90" width="5.6" height="1" fill="#8c8c8c"/><rect x="211.78" y="215.65" width="5.6" height="1" fill="#8c8c8c"/><rect x="211.78" y="223.40" width="5.6" height="1" fill="#8c8c8c"/><rect x="211.78" y="231.15" width="5.6" height="1" fill="#8c8c8c"/><rect x="211.78" y="246.65" width="5.6" height="1" fill="#8c8c8c"/><rect x="211.78" y="254.40" width="5.6" height="1" fill="#8c8c8c"/><rect x="211.78" y="262.15" width="5.6" height="1" fill="#8c8c8c"/><rect x="211.78" y="269.90" width="5.6" height="1" fill="#8c8c8c"/><circle cx="214.58" cy="239.40" r="2.65" fill="#232323" stroke="#b4b4b4" stroke-width="1.35"/><rect x="230.84" y="202" width="2.6" height="75.5" fill="#4c4c4c"/><rect x="230.84" y="202" width="2.6" height="75.5" fill="url(#hatch)"/><rect x="229.34" y="207.90" width="5.6" height="1" fill="#8c8c8c"/><rect x="229.34" y="215.65" width="5.6" height="1" fill="#8c8c8c"/><rect x="229.34" y="223.40" width="5.6" height="1" fill="#8c8c8c"/><rect x="229.34" y="231.15" width="5.6" height="1" fill="#8c8c8c"/><rect x="229.34" y="246.65" width="5.6" height="1" fill="#8c8c8c"/><rect x="229.34" y="254.40" width="5.6" height="1" fill="#8c8c8c"/><rect x="229.34" y="262.15" width="5.6" height="1" fill="#8c8c8c"/><rect x="229.34" y="269.90" width="5.6" height="1" fill="#8c8c8c"/><circle cx="232.14" cy="239.40" r="2.65" fill="#232323" stroke="#b4b4b4" stroke-width="1.35"/><rect x="248.40" y="202" width="2.6" height="75.5" fill="#4c4c4c"/><rect x="248.40" y="202" width="2.6" height="75.5" fill="url(#hatch)"/><rect x="246.90" y="207.90" width="5.6" height="1" fill="#8c8c8c"/><rect x="246.90" y="215.65" width="5.6" height="1" fill="#8c8c8c"/><rect x="246.90" y="223.40" width="5.6" height="1" fill="#8c8c8c"/><rect x="246.90" y="231.15" width="5.6" height="1" fill="#8c8c8c"/><rect x="246.90" y="246.65" width="5.6" height="1" fill="#8c8c8c"/><rect x="246.90" y="254.40" width="5.6" height="1" fill="#8c8c8c"/><rect x="246.90" y="262.15" width="5.6" height="1" fill="#8c8c8c"/><rect x="246.90" y="269.90" width="5.6" height="1" fill="#8c8c8c"/><circle cx="249.70" cy="239.40" r="2.65" fill="#232323" stroke="#b4b4b4" stroke-width="1.35"/><rect x="265.96" y="202" width="2.6" height="75.5" fill="#4c4c4c"/><rect x="265.96" y="202" width="2.6" height="75.5" fill="url(#hatch)"/><rect x="264.46" y="207.90" width="5.6" height="1" fill="#8c8c8c"/><rect x="264.46" y="215.65" width="5.6" height="1" fill="#8c8c8c"/><rect x="264.46" y="223.40" width="5.6" height="1" fill="#8c8c8c"/><rect x="264.46" y="231.15" width="5.6" height="1" fill="#8c8c8c"/><rect x="264.46" y="246.65" width="5.6" height="1" fill="#8c8c8c"/><rect x="264.46" y="254.40" width="5.6" height="1" fill="#8c8c8c"/><rect x="264.46" y="262.15" width="5.6" height="1" fill="#8c8c8c"/><rect x="264.46" y="269.90" width="5.6" height="1" fill="#8c8c8c"/><circle cx="267.26" cy="239.40" r="2.65" fill="#232323" stroke="#b4b4b4" stroke-width="1.35"/><rect x="283.52" y="202" width="2.6" height="75.5" fill="#4c4c4c"/><rect x="283.52" y="202" width="2.6" height="75.5" fill="url(#hatch)"/><rect x="282.02" y="207.90" width="5.6" height="1" fill="#8c8c8c"/><rect x="282.02" y="215.65" width="5.6" height="1" fill="#8c8c8c"/><rect x="282.02" y="223.40" width="5.6" height="1" fill="#8c8c8c"/><rect x="282.02" y="231.15" width="5.6" height="1" fill="#8c8c8c"/><rect x="282.02" y="246.65" width="5.6" height="1" fill="#8c8c8c"/><rect x="282.02" y="254.40" width="5.6" height="1" fill="#8c8c8c"/><rect x="282.02" y="262.15" width="5.6" height="1" fill="#8c8c8c"/><rect x="282.02" y="269.90" width="5.6" height="1" fill="#8c8c8c"/><circle cx="284.82" cy="239.40" r="2.65" fill="#232323" stroke="#b4b4b4" stroke-width="1.35"/><rect x="301.08" y="202" width="2.6" height="75.5" fill="#4c4c4c"/><rect x="301.08" y="202" width="2.6" height="75.5" fill="url(#hatch)"/><rect x="299.58" y="207.90" width="5.6" height="1" fill="#8c8c8c"/><rect x="299.58" y="215.65" width="5.6" height="1" fill="#8c8c8c"/><rect x="299.58" y="223.40" width="5.6" height="1" fill="#8c8c8c"/><rect x="299.58" y="231.15" width="5.6" height="1" fill="#8c8c8c"/><rect x="299.58" y="246.65" width="5.6" height="1" fill="#8c8c8c"/><rect x="299.58" y="254.40" width="5.6" height="1" fill="#8c8c8c"/><rect x="299.58" y="262.15" width="5.6" height="1" fill="#8c8c8c"/><rect x="299.58" y="269.90" width="5.6" height="1" fill="#8c8c8c"/><circle cx="302.38" cy="239.40" r="2.65" fill="#232323" stroke="#b4b4b4" stroke-width="1.35"/><rect x="318.64" y="202" width="2.6" height="75.5" fill="#4c4c4c"/><rect x="318.64" y="202" width="2.6" height="75.5" fill="url(#hatch)"/><rect x="317.14" y="207.90" width="5.6" height="1" fill="#8c8c8c"/><rect x="317.14" y="215.65" width="5.6" height="1" fill="#8c8c8c"/><rect x="317.14" y="223.40" width="5.6" height="1" fill="#8c8c8c"/><rect x="317.14" y="231.15" width="5.6" height="1" fill="#8c8c8c"/><rect x="317.14" y="246.65" width="5.6" height="1" fill="#8c8c8c"/><rect x="317.14" y="254.40" width="5.6" height="1" fill="#8c8c8c"/><rect x="317.14" y="262.15" width="5.6" height="1" fill="#8c8c8c"/><rect x="317.14" y="269.90" width="5.6" height="1" fill="#8c8c8c"/><circle cx="319.94" cy="239.40" r="2.65" fill="#232323" stroke="#b4b4b4" stroke-width="1.35"/><rect x="336.20" y="202" width="2.6" height="75.5" fill="#4c4c4c"/><rect x="336.20" y="202" width="2.6" height="75.5" fill="url(#hatch)"/><rect x="334.70" y="207.90" width="5.6" height="1" fill="#8c8c8c"/><rect x="334.70" y="215.65" width="5.6" height="1" fill="#8c8c8c"/><rect x="334.70" y="223.40" width="5.6" height="1" fill="#8c8c8c"/><rect x="334.70" y="231.15" width="5.6" height="1" fill="#8c8c8c"/><rect x="334.70" y="246.65" width="5.6" height="1" fill="#8c8c8c"/><rect x="334.70" y="254.40" width="5.6" height="1" fill="#8c8c8c"/><rect x="334.70" y="262.15" width="5.6" height="1" fill="#8c8c8c"/><rect x="334.70" y="269.90" width="5.6" height="1" fill="#8c8c8c"/><circle cx="337.50" cy="239.40" r="2.65" fill="#232323" stroke="#b4b4b4" stroke-width="1.35"/><rect x="353.76" y="202" width="2.6" height="75.5" fill="#4c4c4c"/><rect x="353.76" y="202" width="2.6" height="75.5" fill="url(#hatch)"/><rect x="352.26" y="207.90" width="5.6" height="1" fill="#8c8c8c"/><rect x="352.26" y="215.65" width="5.6" height="1" fill="#8c8c8c"/><rect x="352.26" y="223.40" width="5.6" height="1" fill="#8c8c8c"/><rect x="352.26" y="231.15" width="5.6" height="1" fill="#8c8c8c"/><rect x="352.26" y="246.65" width="5.6" height="1" fill="#8c8c8c"/><rect x="352.26" y="254.40" width="5.6" height="1" fill="#8c8c8c"/><rect x="352.26" y="262.15" width="5.6" height="1" fill="#8c8c8c"/><rect x="352.26" y="269.90" width="5.6" height="1" fill="#8c8c8c"/><circle cx="355.06" cy="239.40" r="2.65" fill="#232323" stroke="#b4b4b4" stroke-width="1.35"/><rect x="371.32" y="202" width="2.6" height="75.5" fill="#4c4c4c"/><rect x="371.32" y="202" width="2.6" height="75.5" fill="url(#hatch)"/><rect x="369.82" y="207.90" width="5.6" height="1" fill="#8c8c8c"/><rect x="369.82" y="215.65" width="5.6" height="1" fill="#8c8c8c"/><rect x="369.82" y="223.40" width="5.6" height="1" fill="#8c8c8c"/><rect x="369.82" y="231.15" width="5.6" height="1" fill="#8c8c8c"/><rect x="369.82" y="246.65" width="5.6" height="1" fill="#8c8c8c"/><rect x="369.82" y="254.40" width="5.6" height="1" fill="#8c8c8c"/><rect x="369.82" y="262.15" width="5.6" height="1" fill="#8c8c8c"/><rect x="369.82" y="269.90" width="5.6" height="1" fill="#8c8c8c"/><circle cx="372.62" cy="239.40" r="2.65" fill="#232323" stroke="#b4b4b4" stroke-width="1.35"/><rect x="388.88" y="202" width="2.6" height="75.5" fill="#4c4c4c"/><rect x="388.88" y="202" width="2.6" height="75.5" fill="url(#hatch)"/><rect x="387.38" y="207.90" width="5.6" height="1" fill="#8c8c8c"/><rect x="387.38" y="215.65" width="5.6" height="1" fill="#8c8c8c"/><rect x="387.38" y="223.40" width="5.6" height="1" fill="#8c8c8c"/><rect x="387.38" y="231.15" width="5.6" height="1" fill="#8c8c8c"/><rect x="387.38" y="246.65" width="5.6" height="1" fill="#8c8c8c"/><rect x="387.38" y="254.40" width="5.6" height="1" fill="#8c8c8c"/><rect x="387.38" y="262.15" width="5.6" height="1" fill="#8c8c8c"/><rect x="387.38" y="269.90" width="5.6" height="1" fill="#8c8c8c"/><circle cx="390.18" cy="239.40" r="2.65" fill="#232323" stroke="#b4b4b4" stroke-width="1.35"/><rect x="406.44" y="202" width="2.6" height="75.5" fill="#4c4c4c"/><rect x="406.44" y="202" width="2.6" height="75.5" fill="url(#hatch)"/><rect x="404.94" y="207.90" width="5.6" height="1" fill="#8c8c8c"/><rect x="404.94" y="215.65" width="5.6" height="1" fill="#8c8c8c"/><rect x="404.94" y="223.40" width="5.6" height="1" fill="#8c8c8c"/><rect x="404.94" y="231.15" width="5.6" height="1" fill="#8c8c8c"/><rect x="404.94" y="246.65" width="5.6" height="1" fill="#8c8c8c"/><rect x="404.94" y="254.40" width="5.6" height="1" fill="#8c8c8c"/><rect x="404.94" y="262.15" width="5.6" height="1" fill="#8c8c8c"/><rect x="404.94" y="269.90" width="5.6" height="1" fill="#8c8c8c"/><circle cx="407.74" cy="239.40" r="2.65" fill="#232323" stroke="#b4b4b4" stroke-width="1.35"/><rect x="424.00" y="202" width="2.6" height="75.5" fill="#4c4c4c"/><rect x="424.00" y="202" width="2.6" height="75.5" fill="url(#hatch)"/><rect x="422.50" y="207.90" width="5.6" height="1" fill="#8c8c8c"/><rect x="422.50" y="215.65" width="5.6" height="1" fill="#8c8c8c"/><rect x="422.50" y="223.40" width="5.6" height="1" fill="#8c8c8c"/><rect x="422.50" y="231.15" width="5.6" height="1" fill="#8c8c8c"/><rect x="422.50" y="246.65" width="5.6" height="1" fill="#8c8c8c"/><rect x="422.50" y="254.40" width="5.6" height="1" fill="#8c8c8c"/><rect x="422.50" y="262.15" width="5.6" height="1" fill="#8c8c8c"/><rect x="422.50" y="269.90" width="5.6" height="1" fill="#8c8c8c"/><circle cx="425.30" cy="239.40" r="2.65" fill="#232323" stroke="#b4b4b4" stroke-width="1.35"/><rect x="441.56" y="202" width="2.6" height="75.5" fill="#4c4c4c"/><rect x="441.56" y="202" width="2.6" height="75.5" fill="url(#hatch)"/><rect x="440.06" y="207.90" width="5.6" height="1" fill="#8c8c8c"/><rect x="440.06" y="215.65" width="5.6" height="1" fill="#8c8c8c"/><rect x="440.06" y="223.40" width="5.6" height="1" fill="#8c8c8c"/><rect x="440.06" y="231.15" width="5.6" height="1" fill="#8c8c8c"/><rect x="440.06" y="246.65" width="5.6" height="1" fill="#8c8c8c"/><rect x="440.06" y="254.40" width="5.6" height="1" fill="#8c8c8c"/><rect x="440.06" y="262.15" width="5.6" height="1" fill="#8c8c8c"/><rect x="440.06" y="269.90" width="5.6" height="1" fill="#8c8c8c"/><circle cx="442.86" cy="239.40" r="2.65" fill="#232323" stroke="#b4b4b4" stroke-width="1.35"/><rect x="459.12" y="202" width="2.6" height="75.5" fill="#4c4c4c"/><rect x="459.12" y="202" width="2.6" height="75.5" fill="url(#hatch)"/><rect x="457.62" y="207.90" width="5.6" height="1" fill="#8c8c8c"/><rect x="457.62" y="215.65" width="5.6" height="1" fill="#8c8c8c"/><rect x="457.62" y="223.40" width="5.6" height="1" fill="#8c8c8c"/><rect x="457.62" y="231.15" width="5.6" height="1" fill="#8c8c8c"/><rect x="457.62" y="246.65" width="5.6" height="1" fill="#8c8c8c"/><rect x="457.62" y="254.40" width="5.6" height="1" fill="#8c8c8c"/><rect x="457.62" y="262.15" width="5.6" height="1" fill="#8c8c8c"/><rect x="457.62" y="269.90" width="5.6" height="1" fill="#8c8c8c"/><circle cx="460.42" cy="239.40" r="2.65" fill="#232323" stroke="#b4b4b4" stroke-width="1.35"/><rect x="476.68" y="202" width="2.6" height="75.5" fill="#4c4c4c"/><rect x="476.68" y="202" width="2.6" height="75.5" fill="url(#hatch)"/><rect x="475.18" y="207.90" width="5.6" height="1" fill="#8c8c8c"/><rect x="475.18" y="215.65" width="5.6" height="1" fill="#8c8c8c"/><rect x="475.18" y="223.40" width="5.6" height="1" fill="#8c8c8c"/><rect x="475.18" y="231.15" width="5.6" height="1" fill="#8c8c8c"/><rect x="475.18" y="246.65" width="5.6" height="1" fill="#8c8c8c"/><rect x="475.18" y="254.40" width="5.6" height="1" fill="#8c8c8c"/><rect x="475.18" y="262.15" width="5.6" height="1" fill="#8c8c8c"/><rect x="475.18" y="269.90" width="5.6" height="1" fill="#8c8c8c"/><circle cx="477.98" cy="239.40" r="2.65" fill="#232323" stroke="#b4b4b4" stroke-width="1.35"/><rect x="494.24" y="202" width="2.6" height="75.5" fill="#4c4c4c"/><rect x="494.24" y="202" width="2.6" height="75.5" fill="url(#hatch)"/><rect x="492.74" y="207.90" width="5.6" height="1" fill="#8c8c8c"/><rect x="492.74" y="215.65" width="5.6" height="1" fill="#8c8c8c"/><rect x="492.74" y="223.40" width="5.6" height="1" fill="#8c8c8c"/><rect x="492.74" y="231.15" width="5.6" height="1" fill="#8c8c8c"/><rect x="492.74" y="246.65" width="5.6" height="1" fill="#8c8c8c"/><rect x="492.74" y="254.40" width="5.6" height="1" fill="#8c8c8c"/><rect x="492.74" y="262.15" width="5.6" height="1" fill="#8c8c8c"/><rect x="492.74" y="269.90" width="5.6" height="1" fill="#8c8c8c"/><circle cx="495.54" cy="239.40" r="2.65" fill="#232323" stroke="#b4b4b4" stroke-width="1.35"/><rect x="511.80" y="202" width="2.6" height="75.5" fill="#4c4c4c"/><rect x="511.80" y="202" width="2.6" height="75.5" fill="url(#hatch)"/><rect x="510.30" y="207.90" width="5.6" height="1" fill="#8c8c8c"/><rect x="510.30" y="215.65" width="5.6" height="1" fill="#8c8c8c"/><rect x="510.30" y="223.40" width="5.6" height="1" fill="#8c8c8c"/><rect x="510.30" y="231.15" width="5.6" height="1" fill="#8c8c8c"/><rect x="510.30" y="246.65" width="5.6" height="1" fill="#8c8c8c"/><rect x="510.30" y="254.40" width="5.6" height="1" fill="#8c8c8c"/><rect x="510.30" y="262.15" width="5.6" height="1" fill="#8c8c8c"/><rect x="510.30" y="269.90" width="5.6" height="1" fill="#8c8c8c"/><circle cx="513.10" cy="239.40" r="2.65" fill="#232323" stroke="#b4b4b4" stroke-width="1.35"/><rect x="529.36" y="202" width="2.6" height="75.5" fill="#4c4c4c"/><rect x="529.36" y="202" width="2.6" height="75.5" fill="url(#hatch)"/><rect x="527.86" y="207.90" width="5.6" height="1" fill="#8c8c8c"/><rect x="527.86" y="215.65" width="5.6" height="1" fill="#8c8c8c"/><rect x="527.86" y="223.40" width="5.6" height="1" fill="#8c8c8c"/><rect x="527.86" y="231.15" width="5.6" height="1" fill="#8c8c8c"/><rect x="527.86" y="246.65" width="5.6" height="1" fill="#8c8c8c"/><rect x="527.86" y="254.40" width="5.6" height="1" fill="#8c8c8c"/><rect x="527.86" y="262.15" width="5.6" height="1" fill="#8c8c8c"/><rect x="527.86" y="269.90" width="5.6" height="1" fill="#8c8c8c"/><circle cx="530.66" cy="239.40" r="2.65" fill="#232323" stroke="#b4b4b4" stroke-width="1.35"/><rect x="546.92" y="202" width="2.6" height="75.5" fill="#4c4c4c"/><rect x="546.92" y="202" width="2.6" height="75.5" fill="url(#hatch)"/><rect x="545.42" y="207.90" width="5.6" height="1" fill="#8c8c8c"/><rect x="545.42" y="215.65" width="5.6" height="1" fill="#8c8c8c"/><rect x="545.42" y="223.40" width="5.6" height="1" fill="#8c8c8c"/><rect x="545.42" y="231.15" width="5.6" height="1" fill="#8c8c8c"/><rect x="545.42" y="246.65" width="5.6" height="1" fill="#8c8c8c"/><rect x="545.42" y="254.40" width="5.6" height="1" fill="#8c8c8c"/><rect x="545.42" y="262.15" width="5.6" height="1" fill="#8c8c8c"/><rect x="545.42" y="269.90" width="5.6" height="1" fill="#8c8c8c"/><circle cx="548.22" cy="239.40" r="2.65" fill="#232323" stroke="#b4b4b4" stroke-width="1.35"/><rect x="567.20" y="202" width="2.6" height="75.5" fill="#4c4c4c"/><rect x="567.20" y="202" width="2.6" height="75.5" fill="url(#hatch)"/><rect x="565.70" y="207.90" width="5.6" height="1" fill="#8c8c8c"/><rect x="565.70" y="215.65" width="5.6" height="1" fill="#8c8c8c"/><rect x="565.70" y="223.40" width="5.6" height="1" fill="#8c8c8c"/><rect x="565.70" y="231.15" width="5.6" height="1" fill="#8c8c8c"/><rect x="565.70" y="246.65" width="5.6" height="1" fill="#8c8c8c"/><rect x="565.70" y="254.40" width="5.6" height="1" fill="#8c8c8c"/><rect x="565.70" y="262.15" width="5.6" height="1" fill="#8c8c8c"/><rect x="565.70" y="269.90" width="5.6" height="1" fill="#8c8c8c"/><circle cx="568.50" cy="239.40" r="2.65" fill="#232323" stroke="#b4b4b4" stroke-width="1.35"/></svg>
<div class="t" style="left:50.12px;top:205.00px;font-size:6.10px;color:#a4a4a4;transform:scaleX(0.880);transform-origin:0 0;">20</div>
<div class="t" style="left:573.53px;top:205.00px;font-size:6.10px;color:#a4a4a4;transform:scaleX(0.880);transform-origin:0 0;">20</div>
<div class="t" style="left:50.15px;top:213.00px;font-size:6.10px;color:#a4a4a4;transform:scaleX(0.880);transform-origin:0 0;">15</div>
<div class="t" style="left:573.40px;top:213.00px;font-size:6.10px;color:#a4a4a4;transform:scaleX(0.880);transform-origin:0 0;">15</div>
<div class="t" style="left:50.12px;top:221.00px;font-size:6.10px;color:#a4a4a4;transform:scaleX(0.880);transform-origin:0 0;">10</div>
<div class="t" style="left:573.40px;top:221.00px;font-size:6.10px;color:#a4a4a4;transform:scaleX(0.880);transform-origin:0 0;">10</div>
<div class="t" style="left:53.13px;top:229.00px;font-size:6.10px;color:#a4a4a4;transform:scaleX(0.880);transform-origin:0 0;">5</div>
<div class="t" style="left:573.59px;top:229.00px;font-size:6.10px;color:#a4a4a4;transform:scaleX(0.880);transform-origin:0 0;">5</div>
<div class="t" style="left:53.11px;top:237.00px;font-size:6.10px;color:#a4a4a4;transform:scaleX(0.880);transform-origin:0 0;">0</div>
<div class="t" style="left:573.59px;top:237.00px;font-size:6.10px;color:#a4a4a4;transform:scaleX(0.880);transform-origin:0 0;">0</div>
<div class="t" style="left:51.33px;top:244.00px;font-size:6.10px;color:#a4a4a4;transform:scaleX(0.880);transform-origin:0 0;">-5</div>
<div class="t" style="left:573.56px;top:244.00px;font-size:6.10px;color:#a4a4a4;transform:scaleX(0.880);transform-origin:0 0;">-5</div>
<div class="t" style="left:48.33px;top:252.00px;font-size:6.10px;color:#a4a4a4;transform:scaleX(0.880);transform-origin:0 0;">-10</div>
<div class="t" style="left:573.56px;top:252.00px;font-size:6.10px;color:#a4a4a4;transform:scaleX(0.880);transform-origin:0 0;">-10</div>
<div class="t" style="left:48.35px;top:260.00px;font-size:6.10px;color:#a4a4a4;transform:scaleX(0.880);transform-origin:0 0;">-15</div>
<div class="t" style="left:573.56px;top:260.00px;font-size:6.10px;color:#a4a4a4;transform:scaleX(0.880);transform-origin:0 0;">-15</div>
<div class="t" style="left:48.33px;top:267.00px;font-size:6.10px;color:#a4a4a4;transform:scaleX(0.880);transform-origin:0 0;">-20</div>
<div class="t" style="left:573.56px;top:267.00px;font-size:6.10px;color:#a4a4a4;transform:scaleX(0.880);transform-origin:0 0;">-20</div>
<div class="ab" style="left:35.4px;top:315.2px;width:556.6px;height:36px;border:1px solid #2e2e2e;border-radius:2.5px"></div>
<div class="t" style="left:43.51px;top:332.00px;font-size:7.56px;color:#9a9a9a;transform:scaleX(0.816);transform-origin:0 0;">Range:</div>
<div class="t" style="left:68.66px;top:332.00px;font-size:7.56px;color:#3b8be0;transform:scaleX(0.907);transform-origin:0 0;">48</div>
<div class="t" style="left:77.14px;top:332.00px;font-size:7.56px;color:#9a9a9a;transform:scaleX(0.855);transform-origin:0 0;">dB</div>
<div class="t" style="left:112.90px;top:332.00px;font-size:7.56px;color:#9a9a9a;transform:scaleX(0.792);transform-origin:0 0;">Accuracy:</div>
<div class="t" style="left:142.14px;top:332.00px;font-size:7.56px;color:#3b8be0;transform:scaleX(0.819);transform-origin:0 0;">1000</div>
<div class="t" style="left:156.46px;top:332.00px;font-size:7.56px;color:#9a9a9a;transform:scaleX(0.896);transform-origin:0 0;">points</div>
<div class="t" style="left:204.09px;top:333.00px;font-size:7.41px;color:#9a9a9a;transform:scaleX(0.860);transform-origin:0 0;">Master Gain:</div>
<div class="t" style="left:247.95px;top:330.00px;font-size:5.67px;color:#a4a4a4;transform:scaleX(0.995);transform-origin:0 0;">-50</div>
<div class="t" style="left:266.57px;top:330.00px;font-size:5.67px;color:#a4a4a4;transform:scaleX(1.029);transform-origin:0 0;">0</div>
<div class="t" style="left:281.86px;top:330.00px;font-size:5.67px;color:#a4a4a4;transform:scaleX(1.057);transform-origin:0 0;">50</div>
<svg class="ab" style="left:0;top:0" width="700" height="465"><rect x="246.6" y="339.2" width="19" height="0.7" fill="#6e6e6e"/><rect x="271" y="339.2" width="18.5" height="0.7" fill="#6e6e6e"/><rect x="249" y="338" width="0.7" height="1.2" fill="#7a7a7a"/><rect x="252" y="338" width="0.7" height="1.2" fill="#7a7a7a"/><rect x="255" y="338" width="0.7" height="1.2" fill="#7a7a7a"/><rect x="258" y="338" width="0.7" height="1.2" fill="#7a7a7a"/><rect x="261" y="338" width="0.7" height="1.2" fill="#7a7a7a"/><rect x="264" y="338" width="0.7" height="1.2" fill="#7a7a7a"/><rect x="273" y="338" width="0.7" height="1.2" fill="#7a7a7a"/><rect x="276" y="338" width="0.7" height="1.2" fill="#7a7a7a"/><rect x="279" y="338" width="0.7" height="1.2" fill="#7a7a7a"/><rect x="282" y="338" width="0.7" height="1.2" fill="#7a7a7a"/><rect x="285" y="338" width="0.7" height="1.2" fill="#7a7a7a"/><rect x="288" y="338" width="0.7" height="1.2" fill="#7a7a7a"/><circle cx="268.2" cy="338.7" r="2.8" fill="#232323" stroke="#bdbdbd" stroke-width="1.2"/></svg>
<div class="t" style="left:308.68px;top:333.00px;font-size:7.56px;color:#3b8be0;transform:scaleX(1.075);transform-origin:0 0;">0</div>
<div class="t" style="left:313.94px;top:333.00px;font-size:7.85px;color:#9a9a9a;transform:scaleX(0.823);transform-origin:0 0;">dB</div>
<div class="ab" style="left:32px;top:360px;width:563px;height:1px;background:#2e2e2e"></div>
<div class="t" style="left:32.07px;top:369.00px;font-size:6.25px;color:#9a9a9a;transform:scaleX(0.949);transform-origin:0 0;">In: L, R | Out: L, R</div>
<div class="ab" style="left:32.2px;top:379.9px;width:9.8px;height:10.4px;background:#30a466;border-radius:1.2px"></div>
<svg class="ab" style="left:0;top:0" width="700" height="465"><path d="M35.9,383.1 A2.75,2.75 0 1 0 38.7,383.1" stroke="#9bd8b4" stroke-width="0.8" fill="none"/><path d="M37.3,381.8 V384.6" stroke="#9bd8b4" stroke-width="0.8"/><path d="M51.6,381.8 L57.3,384.7 L51.6,387.6Z" fill="#bdbdbd"/><path d="M70.3,383.3 V387.6 H77.7 V385.2" stroke="#d0d0d0" stroke-width="1.2" fill="none"/><path d="M72.6,386.3 Q72.9,383.2 75.8,383.1" stroke="#d0d0d0" stroke-width="1.1" fill="none"/><path d="M75.5,381.3 L78.2,383.1 L75.5,384.9Z" fill="#d0d0d0"/></svg>
<div class="ab" style="left:499.2px;top:379px;width:45.8px;height:11px;border:1px solid #7a7a7a;border-radius:6px"></div>
<div class="t" style="left:514.30px;top:381.00px;font-size:7.27px;color:#b4b4b4;transform:scaleX(0.870);transform-origin:0 0;">Apply</div>
<div class="ab" style="left:550.2px;top:379px;width:45px;height:11px;border:1px solid #7a7a7a;border-radius:6px"></div>
<div class="t" style="left:565.41px;top:382.00px;font-size:6.98px;color:#b4b4b4;transform:scaleX(0.845);transform-origin:0 0;">Close</div>
<div class="ab" style="left:505.6px;top:372.8px;width:35.2px;height:19px;border:1.7px solid #e51a1a"></div>
</body></html>
